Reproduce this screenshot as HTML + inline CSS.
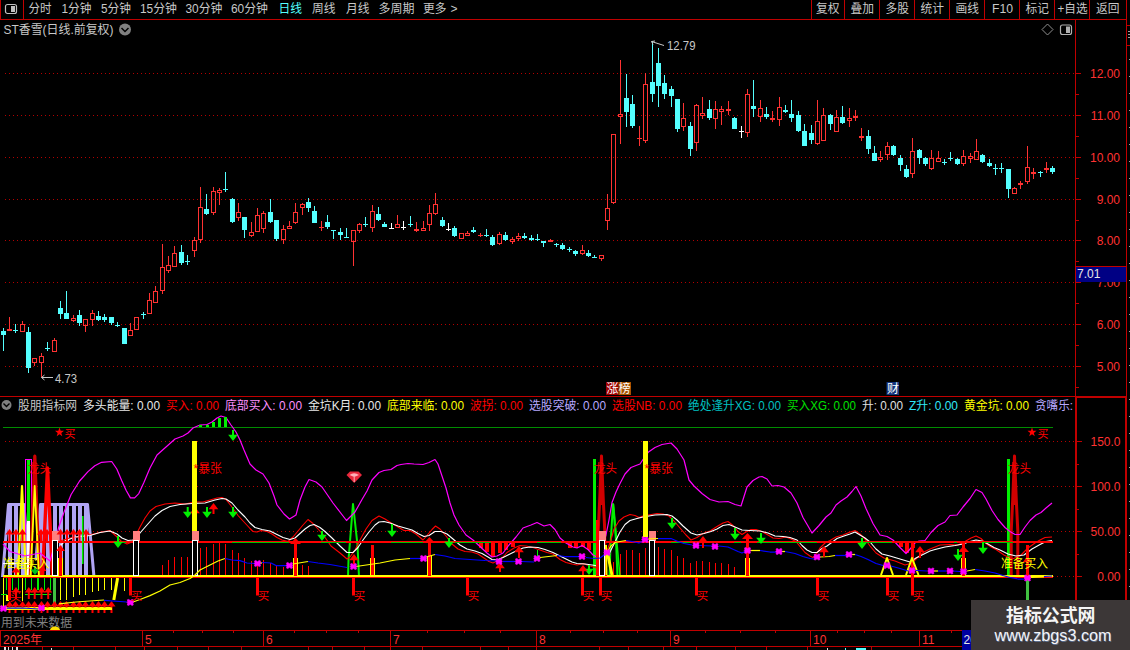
<!DOCTYPE html><html><head><meta charset="utf-8"><title>ST香雪</title><style>html,body{margin:0;padding:0;background:#000}body{width:1130px;height:650px;overflow:hidden}svg{display:block}text{font-family:"Liberation Sans","Noto Sans CJK SC",sans-serif}</style></head><body>
<svg width="1130" height="650" viewBox="0 0 1130 650">
<rect width="1130" height="650" fill="#000"/>
<g shape-rendering="crispEdges">
<line x1="5" y1="73.5" x2="1075" y2="73.5" stroke="#b40000" stroke-width="1" stroke-dasharray="1 3"/>
<line x1="5" y1="115.5" x2="1075" y2="115.5" stroke="#b40000" stroke-width="1" stroke-dasharray="1 3"/>
<line x1="5" y1="157.5" x2="1075" y2="157.5" stroke="#b40000" stroke-width="1" stroke-dasharray="1 3"/>
<line x1="5" y1="199.5" x2="1075" y2="199.5" stroke="#b40000" stroke-width="1" stroke-dasharray="1 3"/>
<line x1="5" y1="240.5" x2="1075" y2="240.5" stroke="#b40000" stroke-width="1" stroke-dasharray="1 3"/>
<line x1="5" y1="282.5" x2="1075" y2="282.5" stroke="#b40000" stroke-width="1" stroke-dasharray="1 3"/>
<line x1="5" y1="324.5" x2="1075" y2="324.5" stroke="#b40000" stroke-width="1" stroke-dasharray="1 3"/>
<line x1="5" y1="366.5" x2="1075" y2="366.5" stroke="#b40000" stroke-width="1" stroke-dasharray="1 3"/>
<rect x="0" y="0" width="1" height="20" fill="#c00000"/>
<rect x="0" y="19" width="1127" height="1" fill="#c00000"/>
<rect x="23" y="0" width="1" height="19" fill="#c00000"/>
<rect x="811" y="0" width="1" height="19" fill="#c00000"/>
<rect x="844" y="0" width="1" height="19" fill="#c00000"/>
<rect x="879" y="0" width="1" height="19" fill="#c00000"/>
<rect x="914" y="0" width="1" height="19" fill="#c00000"/>
<rect x="949" y="0" width="1" height="19" fill="#c00000"/>
<rect x="984" y="0" width="1" height="19" fill="#c00000"/>
<rect x="1019" y="0" width="1" height="19" fill="#c00000"/>
<rect x="1054" y="0" width="1" height="19" fill="#c00000"/>
<rect x="1089" y="0" width="1" height="19" fill="#c00000"/>
<rect x="1126" y="0" width="1" height="397" fill="#c00000"/>
<rect x="1125" y="397" width="2" height="253" fill="#c00000"/>
<rect x="1075" y="20" width="1" height="377" fill="#c00000"/>
<rect x="1075" y="396" width="2" height="204" fill="#c00000"/>
<rect x="0" y="396" width="1076" height="1" fill="#c00000"/>
<rect x="1075" y="396" width="52" height="2" fill="#c00000"/>
<rect x="1076" y="73" width="5" height="1" fill="#c00000"/>
<rect x="1076" y="94" width="3" height="1" fill="#c00000"/>
<rect x="1076" y="115" width="5" height="1" fill="#c00000"/>
<rect x="1076" y="136" width="3" height="1" fill="#c00000"/>
<rect x="1076" y="157" width="5" height="1" fill="#c00000"/>
<rect x="1076" y="178" width="3" height="1" fill="#c00000"/>
<rect x="1076" y="199" width="5" height="1" fill="#c00000"/>
<rect x="1076" y="220" width="3" height="1" fill="#c00000"/>
<rect x="1076" y="240" width="5" height="1" fill="#c00000"/>
<rect x="1076" y="261" width="3" height="1" fill="#c00000"/>
<rect x="1076" y="282" width="5" height="1" fill="#c00000"/>
<rect x="1076" y="303" width="3" height="1" fill="#c00000"/>
<rect x="1076" y="324" width="5" height="1" fill="#c00000"/>
<rect x="1076" y="345" width="3" height="1" fill="#c00000"/>
<rect x="1076" y="366" width="5" height="1" fill="#c00000"/>
<rect x="1076" y="387" width="3" height="1" fill="#c00000"/>
<rect x="1129" y="59" width="1" height="1" fill="#a0a0a0"/>
<rect x="1129" y="76" width="1" height="1" fill="#a0a0a0"/>
<rect x="1129" y="93" width="1" height="1" fill="#a0a0a0"/>
<rect x="1129" y="110" width="1" height="1" fill="#a0a0a0"/>
<rect x="1129" y="127" width="1" height="1" fill="#a0a0a0"/>
<rect x="1129" y="144" width="1" height="1" fill="#a0a0a0"/>
<rect x="1129" y="161" width="1" height="1" fill="#a0a0a0"/>
<rect x="1129" y="178" width="1" height="1" fill="#a0a0a0"/>
<rect x="1129" y="195" width="1" height="1" fill="#a0a0a0"/>
<rect x="1129" y="212" width="1" height="1" fill="#a0a0a0"/>
<rect x="1129" y="229" width="1" height="1" fill="#a0a0a0"/>
<rect x="1129" y="246" width="1" height="1" fill="#a0a0a0"/>
<rect x="1129" y="263" width="1" height="1" fill="#a0a0a0"/>
<rect x="1129" y="280" width="1" height="1" fill="#a0a0a0"/>
<rect x="1129" y="297" width="1" height="1" fill="#a0a0a0"/>
<rect x="1129" y="314" width="1" height="1" fill="#a0a0a0"/>
<rect x="1129" y="331" width="1" height="1" fill="#a0a0a0"/>
<rect x="1129" y="348" width="1" height="1" fill="#a0a0a0"/>
<rect x="1129" y="365" width="1" height="1" fill="#a0a0a0"/>
<rect x="1129" y="382" width="1" height="1" fill="#a0a0a0"/>
<rect x="1129" y="399" width="1" height="1" fill="#a0a0a0"/>
<rect x="1129" y="416" width="1" height="1" fill="#a0a0a0"/>
<rect x="1129" y="433" width="1" height="1" fill="#a0a0a0"/>
<rect x="1129" y="450" width="1" height="1" fill="#a0a0a0"/>
<rect x="1129" y="467" width="1" height="1" fill="#a0a0a0"/>
<rect x="1129" y="484" width="1" height="1" fill="#a0a0a0"/>
<rect x="1129" y="501" width="1" height="1" fill="#a0a0a0"/>
<rect x="1129" y="518" width="1" height="1" fill="#a0a0a0"/>
<rect x="1129" y="535" width="1" height="1" fill="#a0a0a0"/>
<rect x="1129" y="552" width="1" height="1" fill="#a0a0a0"/>
<rect x="1129" y="569" width="1" height="1" fill="#a0a0a0"/>
<rect x="1129" y="586" width="1" height="1" fill="#a0a0a0"/>
<rect x="1129" y="603" width="1" height="1" fill="#a0a0a0"/>
<rect x="1129" y="620" width="1" height="1" fill="#a0a0a0"/>
<rect x="1129" y="637" width="1" height="1" fill="#a0a0a0"/>
<rect x="1127" y="25" width="3" height="1" fill="#c00000"/><rect x="1127" y="45" width="3" height="1" fill="#c00000"/>
<rect x="1128" y="31" width="2" height="1" fill="#a0a0a0"/><rect x="1128" y="34" width="2" height="1" fill="#a0a0a0"/><rect x="1128" y="37" width="2" height="1" fill="#a0a0a0"/>
</g>
<text x="1120" y="78.0" fill="#ff3232" font-size="12" text-anchor="end">12.00</text>
<text x="1120" y="120.0" fill="#ff3232" font-size="12" text-anchor="end">11.00</text>
<text x="1120" y="162.0" fill="#ff3232" font-size="12" text-anchor="end">10.00</text>
<text x="1120" y="204.0" fill="#ff3232" font-size="12" text-anchor="end">9.00</text>
<text x="1120" y="245.0" fill="#ff3232" font-size="12" text-anchor="end">8.00</text>
<text x="1120" y="287.0" fill="#ff3232" font-size="12" text-anchor="end">7.00</text>
<text x="1120" y="329.0" fill="#ff3232" font-size="12" text-anchor="end">6.00</text>
<text x="1120" y="371.0" fill="#ff3232" font-size="12" text-anchor="end">5.00</text>
<text x="28.5" y="13" fill="#c8c8c8" font-size="12" textLength="23" lengthAdjust="spacingAndGlyphs">分时</text>
<text x="61.5" y="13" fill="#c8c8c8" font-size="12" textLength="30" lengthAdjust="spacingAndGlyphs">1分钟</text>
<text x="101" y="13" fill="#c8c8c8" font-size="12" textLength="30" lengthAdjust="spacingAndGlyphs">5分钟</text>
<text x="140" y="13" fill="#c8c8c8" font-size="12" textLength="37" lengthAdjust="spacingAndGlyphs">15分钟</text>
<text x="185.5" y="13" fill="#c8c8c8" font-size="12" textLength="37" lengthAdjust="spacingAndGlyphs">30分钟</text>
<text x="231" y="13" fill="#c8c8c8" font-size="12" textLength="37" lengthAdjust="spacingAndGlyphs">60分钟</text>
<text x="312" y="13" fill="#c8c8c8" font-size="12" textLength="23.5" lengthAdjust="spacingAndGlyphs">周线</text>
<text x="346" y="13" fill="#c8c8c8" font-size="12" textLength="23.5" lengthAdjust="spacingAndGlyphs">月线</text>
<text x="378.5" y="13" fill="#c8c8c8" font-size="12" textLength="36" lengthAdjust="spacingAndGlyphs">多周期</text>
<text x="423" y="13" fill="#c8c8c8" font-size="12" textLength="23.5" lengthAdjust="spacingAndGlyphs">更多</text>
<text x="278.5" y="13" fill="#54ffff" font-size="12" textLength="23.5" lengthAdjust="spacingAndGlyphs">日线</text>
<text x="450.5" y="13" fill="#c8c8c8" font-size="12">&gt;</text>
<text x="816" y="13" fill="#c8c8c8" font-size="12" textLength="23.5" lengthAdjust="spacingAndGlyphs">复权</text>
<text x="850.5" y="13" fill="#c8c8c8" font-size="12" textLength="23.5" lengthAdjust="spacingAndGlyphs">叠加</text>
<text x="885.5" y="13" fill="#c8c8c8" font-size="12" textLength="23.5" lengthAdjust="spacingAndGlyphs">多股</text>
<text x="920.5" y="13" fill="#c8c8c8" font-size="12" textLength="23.5" lengthAdjust="spacingAndGlyphs">统计</text>
<text x="955.5" y="13" fill="#c8c8c8" font-size="12" textLength="23.5" lengthAdjust="spacingAndGlyphs">画线</text>
<text x="992" y="13" fill="#c8c8c8" font-size="12" textLength="21" lengthAdjust="spacingAndGlyphs">F10</text>
<text x="1025.5" y="13" fill="#c8c8c8" font-size="12" textLength="23.5" lengthAdjust="spacingAndGlyphs">标记</text>
<text x="1057.5" y="13" fill="#c8c8c8" font-size="12" textLength="30" lengthAdjust="spacingAndGlyphs">+自选</text>
<text x="1096" y="13" fill="#c8c8c8" font-size="12" textLength="23.5" lengthAdjust="spacingAndGlyphs">返回</text>
<rect x="5.5" y="4.5" width="11" height="9" rx="2" fill="none" stroke="#c0c0c0" stroke-width="1.2"/><rect x="11" y="6" width="4" height="6" fill="#c0c0c0"/>
<text x="3.5" y="33.6" fill="#c8c8c8" font-size="12" textLength="110" lengthAdjust="spacingAndGlyphs">ST香雪(日线.前复权)</text>
<circle cx="125" cy="29.5" r="6" fill="#808080"/><path d="M121.5 28 L125 31.5 L128.5 28" fill="none" stroke="#000" stroke-width="1.5"/>
<path d="M1047.5 24 L1053 29.5 L1047.5 35 L1042 29.5 Z" fill="none" stroke="#909090" stroke-width="1"/>
<rect x="1060.5" y="25" width="11" height="9.5" rx="2" fill="none" stroke="#b0b0b0" stroke-width="1.2"/><rect x="1066" y="26.5" width="4" height="6.5" fill="#b0b0b0"/>
<g shape-rendering="crispEdges">
<rect x="3" y="328" width="1" height="23" fill="#54ffff"/>
<rect x="1" y="331" width="5" height="4" fill="#54ffff"/>
<rect x="9" y="317" width="1" height="14" fill="#ff3232"/>
<rect x="7" y="329" width="5" height="2" fill="#ff3232"/>
<rect x="15" y="324" width="1" height="9" fill="#54ffff"/>
<rect x="13" y="330" width="5" height="1" fill="#54ffff"/>
<rect x="22" y="321" width="1" height="3" fill="#ff3232"/>
<rect x="20.5" y="324.5" width="4" height="7" fill="none" stroke="#ff3232" stroke-width="1"/>
<rect x="28" y="327" width="1" height="46" fill="#54ffff"/>
<rect x="26" y="332" width="5" height="36" fill="#54ffff"/>
<rect x="34" y="363" width="1" height="3" fill="#ff3232"/>
<rect x="32.5" y="358.5" width="4" height="4" fill="none" stroke="#ff3232" stroke-width="1"/>
<rect x="41" y="353" width="1" height="3" fill="#ff3232"/>
<rect x="41" y="363" width="1" height="14" fill="#ff3232"/>
<rect x="39.5" y="356.5" width="4" height="6" fill="none" stroke="#ff3232" stroke-width="1"/>
<rect x="47" y="342" width="1" height="9" fill="#54ffff"/>
<rect x="45" y="348" width="5" height="1" fill="#54ffff"/>
<rect x="54" y="338" width="1" height="2" fill="#ff3232"/>
<rect x="52.5" y="340.5" width="4" height="11" fill="none" stroke="#ff3232" stroke-width="1"/>
<rect x="60" y="301" width="1" height="18" fill="#54ffff"/>
<rect x="58" y="308" width="5" height="6" fill="#54ffff"/>
<rect x="66" y="291" width="1" height="28" fill="#54ffff"/>
<rect x="64" y="313" width="5" height="6" fill="#54ffff"/>
<rect x="73" y="315" width="1" height="3" fill="#ff3232"/>
<rect x="73" y="321" width="1" height="1" fill="#ff3232"/>
<rect x="71.5" y="318.5" width="4" height="2" fill="none" stroke="#ff3232" stroke-width="1"/>
<rect x="79" y="310" width="1" height="16" fill="#54ffff"/>
<rect x="77" y="315" width="5" height="8" fill="#54ffff"/>
<rect x="85" y="326" width="1" height="6" fill="#ff3232"/>
<rect x="83.5" y="319.5" width="4" height="6" fill="none" stroke="#ff3232" stroke-width="1"/>
<rect x="92" y="310" width="1" height="3" fill="#ff3232"/>
<rect x="92" y="320" width="1" height="6" fill="#ff3232"/>
<rect x="90.5" y="313.5" width="4" height="6" fill="none" stroke="#ff3232" stroke-width="1"/>
<rect x="98" y="311" width="1" height="10" fill="#54ffff"/>
<rect x="96" y="316" width="5" height="4" fill="#54ffff"/>
<rect x="104" y="314" width="1" height="8" fill="#54ffff"/>
<rect x="102" y="317" width="5" height="3" fill="#54ffff"/>
<rect x="111" y="317" width="1" height="8" fill="#54ffff"/>
<rect x="109" y="317" width="5" height="6" fill="#54ffff"/>
<rect x="117" y="322" width="1" height="5" fill="#54ffff"/>
<rect x="115" y="325" width="5" height="1" fill="#54ffff"/>
<rect x="124" y="328" width="1" height="16" fill="#54ffff"/>
<rect x="122" y="328" width="5" height="16" fill="#54ffff"/>
<rect x="130" y="323" width="1" height="7" fill="#ff3232"/>
<rect x="128.5" y="330.5" width="4" height="5" fill="none" stroke="#ff3232" stroke-width="1"/>
<rect x="134.5" y="317.5" width="4" height="12" fill="none" stroke="#ff3232" stroke-width="1"/>
<rect x="143" y="312" width="1" height="7" fill="#54ffff"/>
<rect x="141" y="314" width="5" height="1" fill="#54ffff"/>
<rect x="149" y="293" width="1" height="7" fill="#ff3232"/>
<rect x="147.5" y="300.5" width="4" height="13" fill="none" stroke="#ff3232" stroke-width="1"/>
<rect x="155" y="286" width="1" height="5" fill="#ff3232"/>
<rect x="153.5" y="291.5" width="4" height="11" fill="none" stroke="#ff3232" stroke-width="1"/>
<rect x="162" y="244" width="1" height="23" fill="#ff3232"/>
<rect x="162" y="291" width="1" height="3" fill="#ff3232"/>
<rect x="160.5" y="267.5" width="4" height="23" fill="none" stroke="#ff3232" stroke-width="1"/>
<rect x="168" y="256" width="1" height="9" fill="#ff3232"/>
<rect x="168" y="271" width="1" height="2" fill="#ff3232"/>
<rect x="166.5" y="265.5" width="4" height="5" fill="none" stroke="#ff3232" stroke-width="1"/>
<rect x="174" y="246" width="1" height="7" fill="#ff3232"/>
<rect x="172.5" y="253.5" width="4" height="13" fill="none" stroke="#ff3232" stroke-width="1"/>
<rect x="181" y="245" width="1" height="20" fill="#54ffff"/>
<rect x="179" y="252" width="5" height="11" fill="#54ffff"/>
<rect x="187" y="255" width="1" height="10" fill="#54ffff"/>
<rect x="185" y="261" width="5" height="1" fill="#54ffff"/>
<rect x="194" y="237" width="1" height="3" fill="#ff3232"/>
<rect x="194" y="251" width="1" height="6" fill="#ff3232"/>
<rect x="192.5" y="240.5" width="4" height="10" fill="none" stroke="#ff3232" stroke-width="1"/>
<rect x="200" y="187" width="1" height="20" fill="#ff3232"/>
<rect x="200" y="240" width="1" height="3" fill="#ff3232"/>
<rect x="198.5" y="207.5" width="4" height="32" fill="none" stroke="#ff3232" stroke-width="1"/>
<rect x="206" y="194" width="1" height="21" fill="#54ffff"/>
<rect x="204" y="209" width="5" height="5" fill="#54ffff"/>
<rect x="213" y="187" width="1" height="4" fill="#ff3232"/>
<rect x="213" y="213" width="1" height="2" fill="#ff3232"/>
<rect x="211.5" y="191.5" width="4" height="21" fill="none" stroke="#ff3232" stroke-width="1"/>
<rect x="219" y="188" width="1" height="2" fill="#ff3232"/>
<rect x="219" y="193" width="1" height="12" fill="#ff3232"/>
<rect x="217.5" y="190.5" width="4" height="2" fill="none" stroke="#ff3232" stroke-width="1"/>
<rect x="225" y="172" width="1" height="20" fill="#54ffff"/>
<rect x="223" y="189" width="5" height="1" fill="#54ffff"/>
<rect x="232" y="198" width="1" height="25" fill="#54ffff"/>
<rect x="230" y="199" width="5" height="23" fill="#54ffff"/>
<rect x="238" y="203" width="1" height="9" fill="#ff3232"/>
<rect x="238" y="218" width="1" height="3" fill="#ff3232"/>
<rect x="236.5" y="212.5" width="4" height="5" fill="none" stroke="#ff3232" stroke-width="1"/>
<rect x="244" y="217" width="1" height="21" fill="#54ffff"/>
<rect x="242" y="217" width="5" height="13" fill="#54ffff"/>
<rect x="251" y="222" width="1" height="10" fill="#ff3232"/>
<rect x="251" y="236" width="1" height="1" fill="#ff3232"/>
<rect x="249.5" y="232.5" width="4" height="3" fill="none" stroke="#ff3232" stroke-width="1"/>
<rect x="257" y="208" width="1" height="7" fill="#ff3232"/>
<rect x="255.5" y="215.5" width="4" height="16" fill="none" stroke="#ff3232" stroke-width="1"/>
<rect x="263" y="211" width="1" height="2" fill="#ff3232"/>
<rect x="263" y="229" width="1" height="4" fill="#ff3232"/>
<rect x="261.5" y="213.5" width="4" height="15" fill="none" stroke="#ff3232" stroke-width="1"/>
<rect x="270" y="199" width="1" height="24" fill="#54ffff"/>
<rect x="268" y="212" width="5" height="10" fill="#54ffff"/>
<rect x="276" y="220" width="1" height="21" fill="#54ffff"/>
<rect x="274" y="220" width="5" height="19" fill="#54ffff"/>
<rect x="283" y="225" width="1" height="4" fill="#ff3232"/>
<rect x="283" y="240" width="1" height="4" fill="#ff3232"/>
<rect x="281.5" y="229.5" width="4" height="10" fill="none" stroke="#ff3232" stroke-width="1"/>
<rect x="289" y="221" width="1" height="5" fill="#ff3232"/>
<rect x="287.5" y="226.5" width="4" height="2" fill="none" stroke="#ff3232" stroke-width="1"/>
<rect x="295" y="203" width="1" height="9" fill="#ff3232"/>
<rect x="295" y="223" width="1" height="1" fill="#ff3232"/>
<rect x="293.5" y="212.5" width="4" height="10" fill="none" stroke="#ff3232" stroke-width="1"/>
<rect x="302" y="203" width="1" height="1" fill="#ff3232"/>
<rect x="302" y="208" width="1" height="7" fill="#ff3232"/>
<rect x="300.5" y="204.5" width="4" height="3" fill="none" stroke="#ff3232" stroke-width="1"/>
<rect x="308" y="198" width="1" height="14" fill="#54ffff"/>
<rect x="306" y="202" width="5" height="6" fill="#54ffff"/>
<rect x="314" y="206" width="1" height="17" fill="#54ffff"/>
<rect x="312" y="211" width="5" height="12" fill="#54ffff"/>
<rect x="321" y="221" width="1" height="10" fill="#ff3232"/>
<rect x="319" y="227" width="5" height="1" fill="#ff3232"/>
<rect x="327" y="215" width="1" height="14" fill="#54ffff"/>
<rect x="325" y="222" width="5" height="5" fill="#54ffff"/>
<rect x="333" y="230" width="1" height="9" fill="#54ffff"/>
<rect x="331" y="230" width="5" height="1" fill="#54ffff"/>
<rect x="340" y="228" width="1" height="12" fill="#54ffff"/>
<rect x="338" y="232" width="5" height="3" fill="#54ffff"/>
<rect x="346" y="228" width="1" height="10" fill="#54ffff"/>
<rect x="344" y="237" width="5" height="1" fill="#54ffff"/>
<rect x="353" y="242" width="1" height="24" fill="#ff3232"/>
<rect x="351.5" y="230.5" width="4" height="11" fill="none" stroke="#ff3232" stroke-width="1"/>
<rect x="359" y="223" width="1" height="1" fill="#ff3232"/>
<rect x="359" y="231" width="1" height="2" fill="#ff3232"/>
<rect x="357.5" y="224.5" width="4" height="6" fill="none" stroke="#ff3232" stroke-width="1"/>
<rect x="365" y="217" width="1" height="10" fill="#54ffff"/>
<rect x="363" y="224" width="5" height="1" fill="#54ffff"/>
<rect x="372" y="205" width="1" height="6" fill="#ff3232"/>
<rect x="372" y="228" width="1" height="4" fill="#ff3232"/>
<rect x="370.5" y="211.5" width="4" height="16" fill="none" stroke="#ff3232" stroke-width="1"/>
<rect x="378" y="207" width="1" height="14" fill="#54ffff"/>
<rect x="376" y="214" width="5" height="6" fill="#54ffff"/>
<rect x="384" y="222" width="1" height="5" fill="#54ffff"/>
<rect x="382" y="224" width="5" height="3" fill="#54ffff"/>
<rect x="391" y="223" width="1" height="6" fill="#ffffff"/>
<rect x="389" y="228" width="5" height="1" fill="#ffffff"/>
<rect x="397" y="215" width="1" height="9" fill="#ff3232"/>
<rect x="395.5" y="224.5" width="4" height="3" fill="none" stroke="#ff3232" stroke-width="1"/>
<rect x="403" y="221" width="1" height="9" fill="#ffffff"/>
<rect x="401" y="227" width="5" height="1" fill="#ffffff"/>
<rect x="410" y="216" width="1" height="11" fill="#54ffff"/>
<rect x="408" y="224" width="5" height="1" fill="#54ffff"/>
<rect x="416" y="222" width="1" height="10" fill="#ff3232"/>
<rect x="414" y="229" width="5" height="2" fill="#ff3232"/>
<rect x="423" y="221" width="1" height="7" fill="#ff3232"/>
<rect x="421.5" y="228.5" width="4" height="2" fill="none" stroke="#ff3232" stroke-width="1"/>
<rect x="429" y="205" width="1" height="8" fill="#ff3232"/>
<rect x="429" y="225" width="1" height="6" fill="#ff3232"/>
<rect x="427.5" y="213.5" width="4" height="11" fill="none" stroke="#ff3232" stroke-width="1"/>
<rect x="435" y="193" width="1" height="11" fill="#ff3232"/>
<rect x="435" y="214" width="1" height="1" fill="#ff3232"/>
<rect x="433.5" y="204.5" width="4" height="9" fill="none" stroke="#ff3232" stroke-width="1"/>
<rect x="442" y="217" width="1" height="10" fill="#54ffff"/>
<rect x="440" y="220" width="5" height="6" fill="#54ffff"/>
<rect x="448" y="223" width="1" height="8" fill="#ffffff"/>
<rect x="446" y="229" width="5" height="1" fill="#ffffff"/>
<rect x="454" y="226" width="1" height="11" fill="#54ffff"/>
<rect x="452" y="228" width="5" height="8" fill="#54ffff"/>
<rect x="459.5" y="233.5" width="4" height="5" fill="none" stroke="#ff3232" stroke-width="1"/>
<rect x="467" y="231" width="1" height="2" fill="#ff3232"/>
<rect x="465.5" y="233.5" width="4" height="2" fill="none" stroke="#ff3232" stroke-width="1"/>
<rect x="473" y="227" width="1" height="6" fill="#54ffff"/>
<rect x="471" y="230" width="5" height="2" fill="#54ffff"/>
<rect x="480" y="233" width="1" height="4" fill="#ff3232"/>
<rect x="478" y="235" width="5" height="1" fill="#ff3232"/>
<rect x="486" y="229" width="1" height="8" fill="#54ffff"/>
<rect x="484" y="235" width="5" height="1" fill="#54ffff"/>
<rect x="492" y="235" width="1" height="11" fill="#54ffff"/>
<rect x="490" y="237" width="5" height="8" fill="#54ffff"/>
<rect x="499" y="232" width="1" height="2" fill="#ff3232"/>
<rect x="499" y="244" width="1" height="1" fill="#ff3232"/>
<rect x="497.5" y="234.5" width="4" height="9" fill="none" stroke="#ff3232" stroke-width="1"/>
<rect x="505" y="232" width="1" height="9" fill="#54ffff"/>
<rect x="503" y="235" width="5" height="5" fill="#54ffff"/>
<rect x="512" y="237" width="1" height="2" fill="#ff3232"/>
<rect x="512" y="242" width="1" height="2" fill="#ff3232"/>
<rect x="510.5" y="239.5" width="4" height="2" fill="none" stroke="#ff3232" stroke-width="1"/>
<rect x="518" y="233" width="1" height="3" fill="#ff3232"/>
<rect x="518" y="239" width="1" height="2" fill="#ff3232"/>
<rect x="516.5" y="236.5" width="4" height="2" fill="none" stroke="#ff3232" stroke-width="1"/>
<rect x="524" y="233" width="1" height="6" fill="#54ffff"/>
<rect x="522" y="236" width="5" height="2" fill="#54ffff"/>
<rect x="531" y="235" width="1" height="6" fill="#54ffff"/>
<rect x="529" y="238" width="5" height="2" fill="#54ffff"/>
<rect x="537" y="234" width="1" height="7" fill="#54ffff"/>
<rect x="535" y="239" width="5" height="1" fill="#54ffff"/>
<rect x="543" y="241" width="1" height="6" fill="#54ffff"/>
<rect x="541" y="241" width="5" height="2" fill="#54ffff"/>
<rect x="550" y="239" width="1" height="3" fill="#ff3232"/>
<rect x="548" y="240" width="5" height="2" fill="#ff3232"/>
<rect x="556" y="243" width="1" height="4" fill="#54ffff"/>
<rect x="554" y="244" width="5" height="1" fill="#54ffff"/>
<rect x="562" y="243" width="1" height="7" fill="#54ffff"/>
<rect x="560" y="245" width="5" height="4" fill="#54ffff"/>
<rect x="569" y="247" width="1" height="5" fill="#54ffff"/>
<rect x="567" y="249" width="5" height="1" fill="#54ffff"/>
<rect x="575" y="250" width="1" height="6" fill="#54ffff"/>
<rect x="573" y="251" width="5" height="3" fill="#54ffff"/>
<rect x="582" y="245" width="1" height="5" fill="#ff3232"/>
<rect x="582" y="254" width="1" height="1" fill="#ff3232"/>
<rect x="580.5" y="250.5" width="4" height="3" fill="none" stroke="#ff3232" stroke-width="1"/>
<rect x="588" y="250" width="1" height="7" fill="#54ffff"/>
<rect x="586" y="253" width="5" height="3" fill="#54ffff"/>
<rect x="594" y="255" width="1" height="3" fill="#54ffff"/>
<rect x="592" y="257" width="5" height="1" fill="#54ffff"/>
<rect x="601" y="259" width="1" height="2" fill="#ff3232"/>
<rect x="599.5" y="255.5" width="4" height="3" fill="none" stroke="#ff3232" stroke-width="1"/>
<rect x="607" y="194" width="1" height="14" fill="#ff3232"/>
<rect x="607" y="221" width="1" height="9" fill="#ff3232"/>
<rect x="605.5" y="208.5" width="4" height="12" fill="none" stroke="#ff3232" stroke-width="1"/>
<rect x="613" y="203" width="1" height="1" fill="#ff3232"/>
<rect x="611.5" y="134.5" width="4" height="68" fill="none" stroke="#ff3232" stroke-width="1"/>
<rect x="620" y="60" width="1" height="54" fill="#ff3232"/>
<rect x="620" y="117" width="1" height="27" fill="#ff3232"/>
<rect x="618.5" y="114.5" width="4" height="2" fill="none" stroke="#ff3232" stroke-width="1"/>
<rect x="626" y="74" width="1" height="53" fill="#54ffff"/>
<rect x="624" y="98" width="5" height="14" fill="#54ffff"/>
<rect x="632" y="95" width="1" height="33" fill="#54ffff"/>
<rect x="630" y="104" width="5" height="22" fill="#54ffff"/>
<rect x="639" y="126" width="1" height="20" fill="#ff3232"/>
<rect x="637" y="138" width="5" height="1" fill="#ff3232"/>
<rect x="645" y="73" width="1" height="11" fill="#ff3232"/>
<rect x="645" y="141" width="1" height="2" fill="#ff3232"/>
<rect x="643.5" y="84.5" width="4" height="56" fill="none" stroke="#ff3232" stroke-width="1"/>
<rect x="652" y="41" width="1" height="61" fill="#54ffff"/>
<rect x="650" y="82" width="5" height="12" fill="#54ffff"/>
<rect x="658" y="48" width="1" height="59" fill="#54ffff"/>
<rect x="656" y="63" width="5" height="23" fill="#54ffff"/>
<rect x="664" y="75" width="1" height="24" fill="#54ffff"/>
<rect x="662" y="83" width="5" height="11" fill="#54ffff"/>
<rect x="671" y="86" width="1" height="21" fill="#54ffff"/>
<rect x="669" y="89" width="5" height="7" fill="#54ffff"/>
<rect x="677" y="99" width="1" height="33" fill="#54ffff"/>
<rect x="675" y="99" width="5" height="30" fill="#54ffff"/>
<rect x="683" y="103" width="1" height="15" fill="#ff3232"/>
<rect x="683" y="127" width="1" height="4" fill="#ff3232"/>
<rect x="681.5" y="118.5" width="4" height="8" fill="none" stroke="#ff3232" stroke-width="1"/>
<rect x="690" y="122" width="1" height="34" fill="#54ffff"/>
<rect x="688" y="126" width="5" height="23" fill="#54ffff"/>
<rect x="696" y="104" width="1" height="1" fill="#ff3232"/>
<rect x="696" y="143" width="1" height="8" fill="#ff3232"/>
<rect x="694.5" y="105.5" width="4" height="37" fill="none" stroke="#ff3232" stroke-width="1"/>
<rect x="702" y="97" width="1" height="16" fill="#ff3232"/>
<rect x="702" y="116" width="1" height="3" fill="#ff3232"/>
<rect x="700.5" y="113.5" width="4" height="2" fill="none" stroke="#ff3232" stroke-width="1"/>
<rect x="709" y="100" width="1" height="20" fill="#54ffff"/>
<rect x="707" y="109" width="5" height="9" fill="#54ffff"/>
<rect x="715" y="101" width="1" height="8" fill="#ff3232"/>
<rect x="715" y="119" width="1" height="10" fill="#ff3232"/>
<rect x="713.5" y="109.5" width="4" height="9" fill="none" stroke="#ff3232" stroke-width="1"/>
<rect x="721" y="106" width="1" height="3" fill="#ff3232"/>
<rect x="721" y="112" width="1" height="13" fill="#ff3232"/>
<rect x="719.5" y="109.5" width="4" height="2" fill="none" stroke="#ff3232" stroke-width="1"/>
<rect x="728" y="101" width="1" height="14" fill="#ff3232"/>
<rect x="726" y="109" width="5" height="2" fill="#ff3232"/>
<rect x="734" y="117" width="1" height="12" fill="#54ffff"/>
<rect x="732" y="118" width="5" height="11" fill="#54ffff"/>
<rect x="741" y="126" width="1" height="12" fill="#ffffff"/>
<rect x="739" y="131" width="5" height="1" fill="#ffffff"/>
<rect x="747" y="89" width="1" height="5" fill="#ff3232"/>
<rect x="747" y="133" width="1" height="4" fill="#ff3232"/>
<rect x="745.5" y="94.5" width="4" height="38" fill="none" stroke="#ff3232" stroke-width="1"/>
<rect x="753" y="80" width="1" height="37" fill="#54ffff"/>
<rect x="751" y="106" width="5" height="3" fill="#54ffff"/>
<rect x="760" y="100" width="1" height="8" fill="#ff3232"/>
<rect x="760" y="117" width="1" height="5" fill="#ff3232"/>
<rect x="758.5" y="108.5" width="4" height="8" fill="none" stroke="#ff3232" stroke-width="1"/>
<rect x="766" y="107" width="1" height="12" fill="#54ffff"/>
<rect x="764" y="114" width="5" height="3" fill="#54ffff"/>
<rect x="772" y="111" width="1" height="11" fill="#ff3232"/>
<rect x="770" y="118" width="5" height="2" fill="#ff3232"/>
<rect x="779" y="97" width="1" height="10" fill="#ff3232"/>
<rect x="779" y="120" width="1" height="6" fill="#ff3232"/>
<rect x="777.5" y="107.5" width="4" height="12" fill="none" stroke="#ff3232" stroke-width="1"/>
<rect x="785" y="105" width="1" height="8" fill="#54ffff"/>
<rect x="783" y="110" width="5" height="2" fill="#54ffff"/>
<rect x="791" y="100" width="1" height="22" fill="#54ffff"/>
<rect x="789" y="114" width="5" height="4" fill="#54ffff"/>
<rect x="798" y="111" width="1" height="21" fill="#54ffff"/>
<rect x="796" y="115" width="5" height="16" fill="#54ffff"/>
<rect x="804" y="124" width="1" height="22" fill="#54ffff"/>
<rect x="802" y="131" width="5" height="15" fill="#54ffff"/>
<rect x="811" y="125" width="1" height="19" fill="#54ffff"/>
<rect x="809" y="133" width="5" height="7" fill="#54ffff"/>
<rect x="817" y="100" width="1" height="21" fill="#ff3232"/>
<rect x="817" y="144" width="1" height="1" fill="#ff3232"/>
<rect x="815.5" y="121.5" width="4" height="22" fill="none" stroke="#ff3232" stroke-width="1"/>
<rect x="823" y="108" width="1" height="7" fill="#ff3232"/>
<rect x="821.5" y="115.5" width="4" height="25" fill="none" stroke="#ff3232" stroke-width="1"/>
<rect x="830" y="114" width="1" height="16" fill="#54ffff"/>
<rect x="828" y="115" width="5" height="9" fill="#54ffff"/>
<rect x="836" y="110" width="1" height="7" fill="#ff3232"/>
<rect x="834.5" y="117.5" width="4" height="14" fill="none" stroke="#ff3232" stroke-width="1"/>
<rect x="842" y="106" width="1" height="18" fill="#54ffff"/>
<rect x="840" y="117" width="5" height="6" fill="#54ffff"/>
<rect x="849" y="108" width="1" height="10" fill="#ff3232"/>
<rect x="849" y="121" width="1" height="6" fill="#ff3232"/>
<rect x="847.5" y="118.5" width="4" height="2" fill="none" stroke="#ff3232" stroke-width="1"/>
<rect x="855" y="110" width="1" height="11" fill="#ff3232"/>
<rect x="853" y="116" width="5" height="2" fill="#ff3232"/>
<rect x="861" y="128" width="1" height="13" fill="#ff3232"/>
<rect x="859" y="136" width="5" height="2" fill="#ff3232"/>
<rect x="868" y="130" width="1" height="24" fill="#54ffff"/>
<rect x="866" y="136" width="5" height="13" fill="#54ffff"/>
<rect x="874" y="146" width="1" height="15" fill="#54ffff"/>
<rect x="872" y="153" width="5" height="8" fill="#54ffff"/>
<rect x="880" y="151" width="1" height="6" fill="#ff3232"/>
<rect x="880" y="160" width="1" height="2" fill="#ff3232"/>
<rect x="878.5" y="157.5" width="4" height="2" fill="none" stroke="#ff3232" stroke-width="1"/>
<rect x="887" y="142" width="1" height="4" fill="#ff3232"/>
<rect x="887" y="155" width="1" height="5" fill="#ff3232"/>
<rect x="885.5" y="146.5" width="4" height="8" fill="none" stroke="#ff3232" stroke-width="1"/>
<rect x="893" y="145" width="1" height="11" fill="#54ffff"/>
<rect x="891" y="146" width="5" height="9" fill="#54ffff"/>
<rect x="900" y="155" width="1" height="16" fill="#54ffff"/>
<rect x="898" y="158" width="5" height="7" fill="#54ffff"/>
<rect x="906" y="165" width="1" height="13" fill="#54ffff"/>
<rect x="904" y="169" width="5" height="8" fill="#54ffff"/>
<rect x="912" y="138" width="1" height="13" fill="#ff3232"/>
<rect x="912" y="174" width="1" height="4" fill="#ff3232"/>
<rect x="910.5" y="151.5" width="4" height="22" fill="none" stroke="#ff3232" stroke-width="1"/>
<rect x="919" y="149" width="1" height="15" fill="#54ffff"/>
<rect x="917" y="150" width="5" height="8" fill="#54ffff"/>
<rect x="925" y="157" width="1" height="9" fill="#54ffff"/>
<rect x="923" y="158" width="5" height="6" fill="#54ffff"/>
<rect x="931" y="150" width="1" height="8" fill="#ff3232"/>
<rect x="931" y="169" width="1" height="1" fill="#ff3232"/>
<rect x="929.5" y="158.5" width="4" height="10" fill="none" stroke="#ff3232" stroke-width="1"/>
<rect x="938" y="151" width="1" height="7" fill="#ff3232"/>
<rect x="936.5" y="158.5" width="4" height="3" fill="none" stroke="#ff3232" stroke-width="1"/>
<rect x="944" y="159" width="1" height="6" fill="#54ffff"/>
<rect x="942" y="162" width="5" height="1" fill="#54ffff"/>
<rect x="950" y="152" width="1" height="9" fill="#54ffff"/>
<rect x="948" y="158" width="5" height="1" fill="#54ffff"/>
<rect x="957" y="158" width="1" height="7" fill="#54ffff"/>
<rect x="955" y="159" width="5" height="5" fill="#54ffff"/>
<rect x="963" y="150" width="1" height="6" fill="#ff3232"/>
<rect x="963" y="164" width="1" height="2" fill="#ff3232"/>
<rect x="961.5" y="156.5" width="4" height="7" fill="none" stroke="#ff3232" stroke-width="1"/>
<rect x="970" y="153" width="1" height="3" fill="#ff3232"/>
<rect x="970" y="159" width="1" height="4" fill="#ff3232"/>
<rect x="968.5" y="156.5" width="4" height="2" fill="none" stroke="#ff3232" stroke-width="1"/>
<rect x="976" y="139" width="1" height="12" fill="#ff3232"/>
<rect x="974.5" y="151.5" width="4" height="8" fill="none" stroke="#ff3232" stroke-width="1"/>
<rect x="982" y="154" width="1" height="9" fill="#54ffff"/>
<rect x="980" y="155" width="5" height="7" fill="#54ffff"/>
<rect x="989" y="159" width="1" height="8" fill="#54ffff"/>
<rect x="987" y="163" width="5" height="3" fill="#54ffff"/>
<rect x="995" y="164" width="1" height="11" fill="#54ffff"/>
<rect x="993" y="168" width="5" height="1" fill="#54ffff"/>
<rect x="1001" y="163" width="1" height="10" fill="#54ffff"/>
<rect x="999" y="168" width="5" height="1" fill="#54ffff"/>
<rect x="1008" y="169" width="1" height="29" fill="#54ffff"/>
<rect x="1006" y="169" width="5" height="20" fill="#54ffff"/>
<rect x="1014" y="187" width="1" height="1" fill="#ff3232"/>
<rect x="1012.5" y="188.5" width="4" height="5" fill="none" stroke="#ff3232" stroke-width="1"/>
<rect x="1020" y="181" width="1" height="8" fill="#ff3232"/>
<rect x="1018" y="183" width="5" height="2" fill="#ff3232"/>
<rect x="1027" y="146" width="1" height="21" fill="#ff3232"/>
<rect x="1027" y="182" width="1" height="2" fill="#ff3232"/>
<rect x="1025.5" y="167.5" width="4" height="14" fill="none" stroke="#ff3232" stroke-width="1"/>
<rect x="1033" y="168" width="1" height="11" fill="#ff3232"/>
<rect x="1031" y="172" width="5" height="2" fill="#ff3232"/>
<rect x="1040" y="171" width="1" height="6" fill="#54ffff"/>
<rect x="1038" y="172" width="5" height="1" fill="#54ffff"/>
<rect x="1046" y="162" width="1" height="11" fill="#ff3232"/>
<rect x="1044" y="168" width="5" height="2" fill="#ff3232"/>
<rect x="1052" y="166" width="1" height="8" fill="#54ffff"/>
<rect x="1050" y="168" width="5" height="4" fill="#54ffff"/>
</g>
<path d="M41.5 377.5 H53 M41.5 377.5 l3 -2.5 M41.5 377.5 l3 2.5" stroke="#c8c8c8" stroke-width="1" fill="none"/>
<text x="55" y="382.5" fill="#c8c8c8" font-size="12" textLength="22" lengthAdjust="spacingAndGlyphs">4.73</text>
<path d="M651.5 41.5 L664 45.5 M651.5 41.5 l3.5 -0.5 M651.5 41.5 l1.5 3" stroke="#c8c8c8" stroke-width="1" fill="none"/>
<text x="667" y="50" fill="#c8c8c8" font-size="12" textLength="28.5" lengthAdjust="spacingAndGlyphs">12.79</text>
<rect x="1076" y="266" width="50" height="1" fill="#c00000"/><rect x="1076" y="267" width="50" height="15" fill="#000084"/>
<text x="1077" y="278.3" fill="#e8e8e8" font-size="12">7.01</text>
<rect x="606" y="382" width="12.5" height="13" fill="#a00000"/><rect x="618.5" y="382" width="12.5" height="13" fill="#a85000"/>
<text x="606.5" y="393" fill="#ffffff" font-size="12" textLength="24" lengthAdjust="spacingAndGlyphs">涨榜</text>
<rect x="886.5" y="382" width="12.5" height="13" fill="#14347c"/>
<text x="887" y="393" fill="#ffffff" font-size="12">财</text>
<text x="18" y="410" fill="#c8c8c8" font-size="12" textLength="59" lengthAdjust="spacingAndGlyphs">股朋指标网</text>
<text x="83" y="410" fill="#e8e8e8" font-size="12" textLength="77" lengthAdjust="spacingAndGlyphs">多头能量: 0.00</text>
<text x="166" y="410" fill="#ff0000" font-size="12" textLength="53" lengthAdjust="spacingAndGlyphs">买入: 0.00</text>
<text x="225" y="410" fill="#ff90ff" font-size="12" textLength="77" lengthAdjust="spacingAndGlyphs">底部买入: 0.00</text>
<text x="308" y="410" fill="#e8e8e8" font-size="12" textLength="73" lengthAdjust="spacingAndGlyphs">金坑K月: 0.00</text>
<text x="387" y="410" fill="#ffff00" font-size="12" textLength="77" lengthAdjust="spacingAndGlyphs">底部来临: 0.00</text>
<text x="470" y="410" fill="#ff0000" font-size="12" textLength="53" lengthAdjust="spacingAndGlyphs">波拐: 0.00</text>
<text x="529" y="410" fill="#b8a8ff" font-size="12" textLength="77" lengthAdjust="spacingAndGlyphs">选股突破: 0.00</text>
<text x="612" y="410" fill="#ff0000" font-size="12" textLength="70" lengthAdjust="spacingAndGlyphs">选股NB: 0.00</text>
<text x="688" y="410" fill="#00c0c0" font-size="12" textLength="93" lengthAdjust="spacingAndGlyphs">绝处逢升XG: 0.00</text>
<text x="787" y="410" fill="#00e000" font-size="12" textLength="69" lengthAdjust="spacingAndGlyphs">买入XG: 0.00</text>
<text x="862" y="410" fill="#e0e0e0" font-size="12" textLength="41" lengthAdjust="spacingAndGlyphs">升: 0.00</text>
<text x="909" y="410" fill="#30e8f8" font-size="12" textLength="49" lengthAdjust="spacingAndGlyphs">Z升: 0.00</text>
<text x="964" y="410" fill="#ffff00" font-size="12" textLength="65" lengthAdjust="spacingAndGlyphs">黄金坑: 0.00</text>
<text x="1035" y="410" fill="#b8a8ff" font-size="12" textLength="38" lengthAdjust="spacingAndGlyphs">贪嘴乐:</text>
<circle cx="6.5" cy="405" r="5" fill="#808080"/><path d="M3.5 403.5 L6.5 406.5 L9.5 403.5" fill="none" stroke="#000" stroke-width="1.4"/>
<g shape-rendering="crispEdges">
<line x1="5" y1="441.5" x2="1075" y2="441.5" stroke="#b40000" stroke-width="1" stroke-dasharray="1 3"/>
<line x1="5" y1="486.5" x2="1075" y2="486.5" stroke="#b40000" stroke-width="1" stroke-dasharray="1 3"/>
<line x1="5" y1="531.5" x2="1075" y2="531.5" stroke="#b40000" stroke-width="1" stroke-dasharray="1 3"/>
<line x1="5" y1="576.5" x2="1075" y2="576.5" stroke="#b40000" stroke-width="1" stroke-dasharray="1 3"/>
<rect x="1077" y="441" width="5" height="1" fill="#c00000"/>
<rect x="1077" y="486" width="5" height="1" fill="#c00000"/>
<rect x="1077" y="531" width="5" height="1" fill="#c00000"/>
<rect x="1077" y="576" width="5" height="1" fill="#c00000"/>
<rect x="1077" y="464" width="2" height="1" fill="#c00000"/>
<rect x="1077" y="509" width="2" height="1" fill="#c00000"/>
<rect x="1077" y="554" width="2" height="1" fill="#c00000"/>
<rect x="3" y="427" width="1050" height="1" fill="#008c00"/>
</g>
<text x="1120.5" y="446" fill="#ff3232" font-size="12" text-anchor="end">150.0</text>
<text x="1120.5" y="491" fill="#ff3232" font-size="12" text-anchor="end">100.0</text>
<text x="1120.5" y="536" fill="#ff3232" font-size="12" text-anchor="end">50.00</text>
<text x="1120.5" y="581" fill="#ff3232" font-size="12" text-anchor="end">0.00</text>
<g shape-rendering="crispEdges">
<rect x="8" y="505" width="4" height="72" fill="#b0a4f4"/>
<rect x="14" y="505" width="4" height="72" fill="#b0a4f4"/>
<rect x="21" y="505" width="4" height="72" fill="#b0a4f4"/>
<rect x="40" y="505" width="4" height="72" fill="#b0a4f4"/>
<rect x="46" y="505" width="4" height="72" fill="#b0a4f4"/>
<rect x="53" y="505" width="4" height="72" fill="#b0a4f4"/>
<rect x="59" y="505" width="4" height="72" fill="#b0a4f4"/>
<rect x="65" y="505" width="4" height="72" fill="#b0a4f4"/>
<rect x="72" y="505" width="4" height="72" fill="#b0a4f4"/>
<rect x="78" y="505" width="4" height="72" fill="#b0a4f4"/>
<rect x="84" y="505" width="4" height="72" fill="#b0a4f4"/>
</g>
<polyline points="2.5,577.0 8.5,504.5 24.0,504.5 28.0,560.0" fill="none" stroke="#b0a4f4" stroke-width="3" stroke-linejoin="round"/>
<polyline points="36.0,560.0 40.5,504.5 87.5,504.5 94.0,577.0" fill="none" stroke="#b0a4f4" stroke-width="3" stroke-linejoin="round"/>
<g shape-rendering="crispEdges">
<rect x="162" y="565" width="1" height="11" fill="#ff0000"/>
<rect x="168" y="560" width="1" height="16" fill="#ff0000"/>
<rect x="174" y="557" width="1" height="19" fill="#ff0000"/>
<rect x="181" y="557" width="1" height="19" fill="#ff0000"/>
<rect x="187" y="557" width="1" height="19" fill="#ff0000"/>
<rect x="200" y="548" width="1" height="28" fill="#ff0000"/>
<rect x="206" y="547" width="1" height="29" fill="#ff0000"/>
<rect x="213" y="544" width="1" height="32" fill="#ff0000"/>
<rect x="219" y="543" width="1" height="33" fill="#ff0000"/>
<rect x="225" y="544" width="1" height="32" fill="#ff0000"/>
<rect x="232" y="550" width="1" height="26" fill="#ff0000"/>
<rect x="238" y="553" width="1" height="23" fill="#ff0000"/>
<rect x="244" y="558" width="1" height="18" fill="#ff0000"/>
<rect x="251" y="561" width="1" height="15" fill="#ff0000"/>
<rect x="257" y="564" width="1" height="12" fill="#ff0000"/>
<rect x="263" y="560" width="1" height="16" fill="#ff0000"/>
<rect x="270" y="563" width="1" height="13" fill="#ff0000"/>
<rect x="276" y="566" width="1" height="10" fill="#ff0000"/>
<rect x="283" y="567" width="1" height="9" fill="#ff0000"/>
<rect x="302" y="565" width="1" height="11" fill="#ff0000"/>
<rect x="308" y="566" width="1" height="10" fill="#ff0000"/>
<rect x="613" y="561.5" width="1" height="14.5" fill="#ff0000"/>
<rect x="620" y="554" width="1" height="22" fill="#ff0000"/>
<rect x="626" y="550" width="1" height="26" fill="#ff0000"/>
<rect x="632" y="550" width="1" height="26" fill="#ff0000"/>
<rect x="639" y="553" width="1" height="23" fill="#ff0000"/>
<rect x="645" y="548" width="1" height="28" fill="#ff0000"/>
<rect x="658" y="547" width="1" height="29" fill="#ff0000"/>
<rect x="664" y="549" width="1" height="27" fill="#ff0000"/>
<rect x="671" y="550" width="1" height="26" fill="#ff0000"/>
<rect x="677" y="556" width="1" height="20" fill="#ff0000"/>
<rect x="683" y="558" width="1" height="18" fill="#ff0000"/>
<rect x="690" y="563" width="1" height="13" fill="#ff0000"/>
<rect x="696" y="561" width="1" height="15" fill="#ff0000"/>
<rect x="702" y="561" width="1" height="15" fill="#ff0000"/>
<rect x="709" y="562" width="1" height="14" fill="#ff0000"/>
<rect x="715" y="563" width="1" height="13" fill="#ff0000"/>
<rect x="721" y="563" width="1" height="13" fill="#ff0000"/>
<rect x="728" y="564" width="1" height="12" fill="#ff0000"/>
<rect x="734" y="567" width="1" height="9" fill="#ff0000"/>
<rect x="3" y="577" width="1" height="24" fill="#ffff00"/>
<rect x="22" y="577" width="1" height="24" fill="#ffff00"/>
<rect x="60" y="577" width="1" height="22.5" fill="#ffff00"/>
<rect x="66" y="577" width="1" height="22.5" fill="#ffff00"/>
<rect x="73" y="577" width="1" height="20" fill="#ffff00"/>
<rect x="79" y="577" width="1" height="18" fill="#ffff00"/>
<rect x="85" y="577" width="1" height="17.5" fill="#ffff00"/>
<rect x="92" y="577" width="1" height="15" fill="#ffff00"/>
<rect x="98" y="577" width="1" height="14" fill="#ffff00"/>
<rect x="104" y="577" width="1" height="13" fill="#ffff00"/>
<rect x="111" y="577" width="1" height="12.5" fill="#ffff00"/>
<rect x="124" y="577" width="1" height="14" fill="#ffff00"/>
<rect x="6" y="577" width="1" height="13" fill="#00f000"/>
<rect x="12" y="577" width="1" height="13" fill="#00f000"/>
<rect x="18" y="577" width="1" height="13" fill="#00f000"/>
<rect x="25" y="577" width="1" height="13" fill="#00f000"/>
<rect x="31" y="577" width="1" height="13" fill="#00f000"/>
<rect x="44" y="577" width="1" height="13" fill="#00f000"/>
<rect x="50" y="577" width="1" height="13" fill="#00f000"/>
<rect x="37" y="577" width="2" height="13" fill="#00f000"/>
<rect x="1" y="594" width="6" height="1" fill="#00f000"/>
<rect x="25" y="594" width="26" height="1" fill="#00f000"/>
<rect x="3" y="595" width="1" height="12" fill="#ffff00"/>
<rect x="5.5" y="595" width="3" height="6" fill="#ffff00"/>
<rect x="479" y="542" width="3.5" height="6" fill="#ff0000"/>
<rect x="485" y="542" width="3.5" height="10" fill="#ff0000"/>
<rect x="491" y="542" width="3.5" height="14.5" fill="#ff0000"/>
<rect x="498" y="542" width="3.5" height="11" fill="#ff0000"/>
<rect x="504" y="542" width="3.5" height="8" fill="#ff0000"/>
<rect x="511" y="542" width="3.5" height="5" fill="#ff0000"/>
<rect x="568" y="542" width="3.5" height="6" fill="#ff0000"/>
<rect x="574" y="542" width="3.5" height="6" fill="#ff0000"/>
<rect x="581" y="542" width="3.5" height="5" fill="#ff0000"/>
<rect x="587" y="542" width="3.5" height="7.5" fill="#ff0000"/>
<rect x="593" y="542" width="3.5" height="11" fill="#ff0000"/>
<rect x="899" y="542" width="3.5" height="5" fill="#ff0000"/>
<rect x="905" y="542" width="3.5" height="11" fill="#ff0000"/>
<rect x="911" y="542" width="3.5" height="6" fill="#ff0000"/>
</g>
<g shape-rendering="crispEdges">
<rect x="25.5" y="459.5" width="6" height="118" fill="none" stroke="#ff00ff" stroke-width="1"/>
<rect x="27" y="460" width="3" height="117" fill="#00f000"/>
<rect x="27" y="521" width="3" height="56" fill="#ffffff"/>
</g>
<polyline points="30.2,577.0 34.8,456.0 39.4,577.0" fill="none" stroke="#d00000" stroke-width="3.2" stroke-linejoin="round"/>
<path d="M34.8 453 L37 505 L32.6 505 Z" fill="#d00000"/>
<polyline points="18.0,577.0 22.0,486.0 26.0,577.0" fill="none" stroke="#ffff00" stroke-width="2.2" stroke-linejoin="round"/>
<polyline points="30.5,577.0 34.7,486.0 39.0,577.0" fill="none" stroke="#ffff00" stroke-width="1.8" stroke-linejoin="round"/>
<polyline points="42.5,577.0 47.5,468.0 52.5,577.0" fill="none" stroke="#ff0000" stroke-width="3.4" stroke-linejoin="round"/>
<rect x="593" y="459" width="3" height="118" fill="#00f000" shape-rendering="crispEdges"/>
<polyline points="598.2,577.0 598.2,531.0 599.7,500.0 601.5,456.0 603.3,500.0 604.8,531.0 604.8,577.0" fill="none" stroke="#d00000" stroke-width="3" stroke-linejoin="round"/>
<path d="M601.5 455 L604.0 505 L599.0 505 Z" fill="#d00000"/>
<rect x="1007" y="459" width="3" height="118" fill="#00f000" shape-rendering="crispEdges"/>
<polyline points="1011.2,577.0 1011.2,531.0 1012.7,500.0 1014.5,456.0 1016.3,500.0 1017.8,531.0 1017.8,577.0" fill="none" stroke="#d00000" stroke-width="3" stroke-linejoin="round"/>
<path d="M1014.5 455 L1017.0 505 L1012.0 505 Z" fill="#d00000"/>
<polyline points="348.0,577.0 348.5,560.0 353.0,504.0 357.5,545.0 359.0,577.0" fill="none" stroke="#00f000" stroke-width="2" stroke-linejoin="round"/>
<polyline points="609.5,577.0 610.5,545.0 613.0,504.0 616.0,540.0 617.5,577.0" fill="none" stroke="#00f000" stroke-width="2" stroke-linejoin="round"/>
<polyline points="613.5,504.0 620.0,577.0" fill="none" stroke="#00f000" stroke-width="1.5" stroke-linejoin="round"/>
<polyline points="1027.5,545.0 1027.5,577.0" fill="none" stroke="#00f000" stroke-width="1" stroke-linejoin="round"/>
<polyline points="3.0,544.0 10.0,551.5 25.0,556.0 40.0,553.0 50.0,561.0 54.0,547.0 58.4,528.3 64.3,511.4 71.1,494.5 79.6,481.0 88.0,471.6 94.8,465.7 101.6,462.3 111.7,461.5 116.8,469.0 121.9,481.0 126.1,490.3 130.4,497.9 134.6,497.9 138.8,493.6 143.9,482.6 150.0,468.0 157.0,455.0 166.0,447.0 175.0,439.0 183.0,436.0 188.0,433.0 193.0,428.0 200.0,425.0 207.0,424.5 212.0,422.0 217.0,418.0 221.0,416.0 226.0,417.5 231.0,425.0 236.0,432.0 240.0,440.0 244.0,450.0 250.0,464.0 256.0,470.0 263.0,474.0 269.0,483.0 274.0,496.0 277.0,505.0 284.0,514.0 289.5,519.0 296.0,515.0 300.0,500.0 305.0,487.0 309.0,479.5 316.0,482.0 322.0,487.0 333.0,503.0 346.5,520.5 355.0,512.0 362.0,499.5 367.0,491.0 372.0,480.0 379.0,472.5 384.0,470.5 391.0,469.5 397.0,465.5 401.0,464.5 408.0,463.5 414.0,464.0 423.0,464.5 429.0,462.5 435.0,459.5 438.0,464.0 442.0,476.0 446.0,488.0 450.0,503.0 454.0,515.0 459.0,525.0 466.0,535.0 473.0,540.0 480.0,546.5 487.0,553.0 492.0,557.0 497.0,556.0 503.0,553.0 509.0,545.0 516.0,537.0 523.0,528.0 531.0,525.0 537.0,522.5 544.0,526.0 550.0,524.5 555.0,529.5 560.0,538.0 566.0,543.0 573.0,547.0 577.0,548.0 582.0,545.5 588.0,549.5 593.0,555.0 597.0,557.0 603.0,545.0 606.0,535.0 609.0,520.0 612.0,502.5 616.0,492.0 620.0,483.5 625.0,474.0 631.0,467.5 636.0,465.5 640.0,464.0 643.0,459.5 648.5,452.0 655.0,447.5 662.0,444.5 671.0,443.0 677.0,449.0 684.0,460.0 689.0,480.0 694.0,486.0 702.0,493.5 710.0,499.5 719.0,502.0 728.0,501.5 735.0,504.5 741.0,506.0 744.0,496.5 747.0,487.0 753.0,480.5 759.0,477.0 762.0,476.5 767.0,479.0 772.0,486.0 778.0,485.5 784.0,487.0 791.0,493.0 797.0,503.0 803.0,517.5 808.0,526.0 812.0,533.0 819.0,525.5 826.0,517.0 831.0,513.0 836.0,505.0 841.0,501.0 847.0,497.0 852.0,491.5 856.0,486.5 861.0,496.0 866.0,508.5 873.0,523.5 880.0,535.0 887.0,536.5 893.0,540.0 900.0,547.5 906.0,553.5 911.0,548.0 914.0,543.5 919.0,541.0 925.0,540.5 931.0,532.5 938.0,525.5 945.0,522.0 950.0,515.5 957.0,515.0 963.0,507.0 970.0,498.5 976.0,489.5 982.0,492.5 986.0,499.0 992.0,510.5 998.0,519.5 1005.0,527.5 1010.0,531.5 1015.0,534.5 1020.0,534.5 1025.0,527.0 1030.0,520.5 1036.0,515.0 1041.0,512.5 1046.0,508.0 1052.0,503.0" fill="none" stroke="#ff00ff" stroke-width="1.2" stroke-linejoin="round"/>
<polyline points="60.0,541.0 70.0,538.0 85.0,536.0 101.6,532.0 110.0,530.5 116.0,536.0 121.0,541.0 127.0,544.0 132.0,542.0 137.0,533.0 140.0,527.0 145.0,518.0 150.0,511.0 156.0,506.5 165.0,504.0 175.0,503.0 185.0,504.0 195.0,502.0 203.0,502.0 210.0,500.0 217.0,498.0 222.0,497.5 226.0,499.5 232.0,507.0 238.0,515.5 244.0,522.0 250.0,528.5 253.0,531.5 257.0,532.0 261.0,530.5 267.0,531.5 272.0,534.0 277.0,537.5 282.0,540.0 288.0,541.5 293.0,537.0 298.0,531.0 303.0,525.0 308.0,519.5 313.0,523.5 318.0,529.0 323.0,534.5 331.0,546.0 340.0,553.0 347.0,559.0 350.0,557.0 355.0,550.0 360.0,540.0 366.0,529.0 372.0,520.5 379.0,516.0 385.0,519.0 392.0,523.5 398.0,527.0 404.0,530.5 410.0,530.5 416.0,534.0 423.0,540.0 427.0,535.5 432.0,529.5 435.5,526.0 440.0,529.0 446.0,536.0 452.0,544.0 458.0,549.0 465.0,551.5 472.0,552.0 478.0,554.0 484.0,558.0 489.0,561.5 493.0,563.0 497.0,561.0 503.0,557.0 507.0,552.5 514.0,548.0 520.0,545.5 526.0,546.0 533.0,547.5 540.0,550.0 547.0,552.5 553.0,554.0 560.0,559.5 566.0,562.5 572.0,564.0 577.0,565.0 583.0,563.5 590.0,566.0 597.0,568.0 603.0,560.0 608.0,548.0 611.0,540.0 614.0,529.0 619.0,521.0 624.0,517.0 630.0,514.5 635.0,515.5 639.0,517.5 643.0,516.0 657.0,513.5 663.0,514.0 669.0,516.0 674.0,521.0 680.0,528.0 686.0,535.0 691.0,540.0 697.0,537.5 703.0,533.5 710.0,531.0 717.0,526.5 723.0,523.0 728.0,521.5 733.0,525.5 738.0,531.5 742.0,534.5 746.0,532.0 751.0,529.5 756.0,529.5 762.0,531.5 768.0,535.0 773.0,538.0 779.0,538.5 786.0,537.0 791.0,539.0 796.0,541.5 800.0,546.5 805.0,552.5 810.0,556.0 813.0,557.5 817.0,553.0 820.0,548.0 825.0,543.0 830.0,540.5 836.0,537.0 843.0,535.0 849.0,532.5 855.0,530.5 860.0,534.0 865.0,539.0 870.0,546.0 876.0,553.0 884.0,558.0 895.0,561.0 905.0,565.0 912.0,563.0 918.0,557.0 924.0,552.0 930.0,549.0 940.0,545.0 950.0,544.5 958.0,545.0 965.0,541.5 971.0,538.0 976.0,536.0 981.0,538.5 986.0,543.5 991.0,547.0 996.0,549.5 1004.0,555.0 1012.0,559.0 1020.0,556.0 1028.0,548.0 1035.0,543.0 1040.0,540.0 1045.0,537.5 1052.0,537.0" fill="none" stroke="#ff0000" stroke-width="1.1" stroke-linejoin="round"/>
<polyline points="60.0,546.0 65.0,541.0 75.0,537.0 90.0,535.5 100.0,532.5 110.0,531.0 117.0,534.0 122.0,538.0 128.0,540.5 133.0,540.0 140.0,533.0 147.0,525.0 155.0,516.0 162.0,510.5 170.0,506.5 180.0,504.5 192.0,503.5 205.0,503.0 215.0,500.0 222.0,498.5 226.0,499.0 232.0,503.0 238.0,510.0 245.0,517.0 250.0,523.0 255.0,527.5 262.0,529.5 270.0,531.0 276.0,534.0 283.0,537.5 290.0,539.5 295.0,538.0 300.0,533.5 305.0,529.0 310.0,525.5 314.0,524.5 320.0,527.5 325.0,531.5 332.0,538.0 340.0,546.0 347.0,552.5 353.0,552.5 358.0,547.5 363.0,540.0 369.0,532.0 375.0,525.0 379.0,522.0 384.0,521.5 390.0,523.0 398.0,526.0 405.0,528.0 412.0,530.0 418.0,533.5 424.0,536.5 429.0,535.5 435.0,531.5 441.0,531.5 447.0,534.0 453.0,539.0 460.0,545.0 467.0,549.0 475.0,551.0 482.0,553.5 488.0,557.0 492.0,559.5 497.0,560.0 503.0,557.5 509.0,554.5 516.0,551.0 523.0,548.0 530.0,547.0 538.0,547.5 545.0,549.5 553.0,552.5 560.0,556.0 567.0,559.5 572.0,562.0 577.0,563.5 585.0,564.0 592.0,565.0 598.0,566.0 604.0,562.0 610.0,552.0 616.0,540.0 620.0,532.0 625.0,524.5 630.0,520.5 637.0,518.5 643.0,517.0 655.0,515.0 667.0,514.5 672.0,516.0 677.0,520.0 683.0,526.0 691.0,533.0 697.0,535.0 704.0,533.5 711.0,531.5 717.0,529.0 723.0,525.5 729.0,524.5 735.0,527.0 742.0,530.0 750.0,530.5 760.0,531.0 768.0,533.0 775.0,536.0 783.0,536.5 790.0,537.5 797.0,540.0 802.0,545.5 807.0,550.0 812.0,552.5 817.0,552.5 822.0,548.5 827.0,546.0 831.0,543.0 837.0,538.5 844.0,536.0 850.0,534.0 855.0,532.0 860.0,535.0 865.0,538.0 870.0,542.0 876.0,549.0 882.0,554.0 890.0,556.0 900.0,559.0 910.0,562.0 916.0,558.0 922.0,555.0 930.0,551.0 935.0,549.5 945.0,547.0 955.0,545.5 963.0,544.0 970.0,541.5 976.0,540.0 982.0,541.0 988.0,544.0 994.0,547.5 1000.0,550.0 1008.0,554.0 1016.0,556.0 1024.0,555.0 1032.0,549.0 1040.0,544.5 1046.0,541.5 1052.0,540.5" fill="none" stroke="#ffffff" stroke-width="1.1" stroke-linejoin="round"/>
<g shape-rendering="crispEdges">
<rect x="193" y="426.5" width="3" height="0.5" fill="#00f000"/>
<rect x="199" y="425" width="3" height="2" fill="#00f000"/>
<rect x="206" y="424.5" width="3" height="2.5" fill="#00f000"/>
<rect x="212" y="422" width="3" height="5" fill="#00f000"/>
<rect x="218" y="417.5" width="3" height="9.5" fill="#00f000"/>
<rect x="224" y="417" width="3" height="10" fill="#00f000"/>
<rect x="3" y="541" width="1050" height="2" fill="#ff0000"/>
<rect x="118" y="542" width="8" height="1" fill="#00c000"/>
<rect x="232" y="542" width="57" height="1" fill="#00c000"/>
<rect x="321" y="542" width="25" height="1" fill="#00c000"/>
<rect x="391" y="542" width="32" height="1" fill="#00c000"/>
<rect x="455" y="542" width="36" height="1" fill="#00c000"/>
<rect x="537" y="542" width="24" height="1" fill="#00c000"/>
<rect x="671" y="542" width="19" height="1" fill="#00c000"/>
<rect x="734" y="542" width="7" height="1" fill="#00c000"/>
<rect x="757" y="542" width="60" height="1" fill="#00c000"/>
<rect x="860" y="542" width="32" height="1" fill="#00c000"/>
<rect x="954" y="542" width="3" height="1" fill="#00c000"/>
<rect x="982" y="542" width="31" height="1" fill="#00c000"/>
<rect x="3" y="574.5" width="1050" height="3" fill="#ffff00"/>
<rect x="3" y="577" width="1050" height="1" fill="#ff0000"/>
<rect x="5" y="607" width="107" height="3" fill="#ffff00"/>
<rect x="596" y="520" width="2.5" height="56" fill="#ff0000"/>
<rect x="604.5" y="545" width="2.5" height="31" fill="#ff0000"/>
<rect x="51.5" y="531" width="7" height="9.5" fill="#ff8080"/>
<rect x="52.5" y="540.5" width="5" height="35" fill="#000" stroke="#ffffff" stroke-width="1"/>
<rect x="132.5" y="531" width="7" height="9.5" fill="#ff8080"/>
<rect x="133.5" y="540.5" width="5" height="35" fill="#000" stroke="#ffffff" stroke-width="1"/>
<rect x="191.5" y="531" width="7" height="9.5" fill="#ff8080"/>
<rect x="192.5" y="540.5" width="5" height="35" fill="#000" stroke="#ffffff" stroke-width="1"/>
<rect x="598.5" y="531" width="7" height="9.5" fill="#ff8080"/>
<rect x="599.5" y="540.5" width="5" height="35" fill="#000" stroke="#ffffff" stroke-width="1"/>
<rect x="648.5" y="531" width="7" height="9.5" fill="#ff8080"/>
<rect x="649.5" y="540.5" width="5" height="35" fill="#000" stroke="#ffffff" stroke-width="1"/>
<rect x="53" y="578" width="3" height="31" fill="#40c040"/>
<rect x="1026" y="578" width="3" height="31" fill="#40c040"/>
</g>
<rect x="294" y="542" width="3" height="34" fill="#ff0000"/>
<path d="M295.5 538 L301.0 544 L290.0 544 Z" fill="#ff0000"/>
<rect x="293" y="558" width="1" height="17" fill="#ffff00"/><rect x="297" y="558" width="1" height="17" fill="#ffff00"/>
<rect x="428" y="541" width="3" height="35" fill="#ff0000"/>
<path d="M429.5 537 L435.0 543 L424.0 543 Z" fill="#ff0000"/>
<rect x="427" y="556" width="1" height="19" fill="#ffff00"/><rect x="431" y="556" width="1" height="19" fill="#ffff00"/>
<rect x="746" y="537" width="3" height="39" fill="#ff0000"/>
<path d="M747.5 533 L753.0 539 L742.0 539 Z" fill="#ff0000"/>
<rect x="745" y="558" width="1" height="17" fill="#ffff00"/><rect x="749" y="558" width="1" height="17" fill="#ffff00"/>
<rect x="962" y="542" width="3" height="34" fill="#ff0000"/>
<path d="M963.5 546 L969.0 552 L958.0 552 Z" fill="#ff0000"/>
<rect x="961" y="558" width="1" height="17" fill="#ffff00"/><rect x="965" y="558" width="1" height="17" fill="#ffff00"/>
<rect x="371" y="545" width="3" height="30" fill="#ff0000"/>
<rect x="370" y="558" width="1" height="17" fill="#ffff00"/><rect x="374" y="558" width="1" height="17" fill="#ffff00"/>
<rect x="1026" y="545" width="3" height="31" fill="#ff0000"/>
<rect x="911" y="542" width="3" height="53" fill="#ff0000"/>
<path d="M9.5 529 L13.5 534.5 L5.5 534.5 Z" fill="#ff0000"/>
<rect x="8.5" y="534" width="2" height="7" fill="#ff0000"/>
<path d="M16 529 L20 534.5 L12 534.5 Z" fill="#ff0000"/>
<rect x="15" y="534" width="2" height="7" fill="#ff0000"/>
<path d="M22.5 529 L26.5 534.5 L18.5 534.5 Z" fill="#ff0000"/>
<rect x="21.5" y="534" width="2" height="7" fill="#ff0000"/>
<path d="M41 529 L45 534.5 L37 534.5 Z" fill="#ff0000"/>
<rect x="40" y="534" width="2" height="7" fill="#ff0000"/>
<path d="M47 529 L51 534.5 L43 534.5 Z" fill="#ff0000"/>
<rect x="46" y="534" width="2" height="7" fill="#ff0000"/>
<path d="M60.5 529 L64.5 534.5 L56.5 534.5 Z" fill="#ff0000"/>
<rect x="59.5" y="534" width="2" height="7" fill="#ff0000"/>
<path d="M67 529 L71 534.5 L63 534.5 Z" fill="#ff0000"/>
<rect x="66" y="534" width="2" height="7" fill="#ff0000"/>
<path d="M73.5 529 L77.5 534.5 L69.5 534.5 Z" fill="#ff0000"/>
<rect x="72.5" y="534" width="2" height="7" fill="#ff0000"/>
<path d="M79.5 529 L83.5 534.5 L75.5 534.5 Z" fill="#ff0000"/>
<rect x="78.5" y="534" width="2" height="7" fill="#ff0000"/>
<path d="M86 529 L90 534.5 L82 534.5 Z" fill="#ff0000"/>
<rect x="85" y="534" width="2" height="7" fill="#ff0000"/>
<rect x="59" y="549" width="3" height="27" fill="#ff0000"/>
<path d="M60.5 545 L65 551 L56 551 Z" fill="#ff0000"/>
<rect x="58" y="558" width="1" height="17" fill="#ffff00"/><rect x="62" y="558" width="1" height="17" fill="#ffff00"/>
<path d="M16 567 L20.5 572.5 L11.5 572.5 Z" fill="#ff0000"/><rect x="15.0" y="572.0" width="2" height="3.0" fill="#ff0000"/>
<path d="M42 565 L46.5 571 L37.5 571 Z" fill="#ff0000"/><rect x="40.5" y="570.5" width="3" height="4.5" fill="#ff0000"/>
<path d="M35 575 L39.5 569.5 L30.5 569.5 Z" fill="#00c020"/><rect x="34.0" y="566" width="2" height="4.0" fill="#00c020"/>
<rect x="82" y="516" width="1.5" height="48" fill="#00f000"/>
<rect x="8" y="577" width="3" height="23" fill="#ff0000"/>
<path d="M16 587 L20 592.5 L12 592.5 Z" fill="#ff0000"/><rect x="15.0" y="592.0" width="2" height="7.0" fill="#ff0000"/>
<path d="M28.8 587 L32.8 592.5 L24.8 592.5 Z" fill="#ff0000"/><rect x="27.8" y="592.0" width="2" height="7.0" fill="#ff0000"/>
<path d="M34.7 587 L38.7 592.5 L30.700000000000003 592.5 Z" fill="#ff0000"/><rect x="33.7" y="592.0" width="2" height="7.0" fill="#ff0000"/>
<path d="M41.5 587 L45.5 592.5 L37.5 592.5 Z" fill="#ff0000"/><rect x="40.5" y="592.0" width="2" height="7.0" fill="#ff0000"/>
<path d="M48.2 587 L52.2 592.5 L44.2 592.5 Z" fill="#ff0000"/><rect x="47.2" y="592.0" width="2" height="7.0" fill="#ff0000"/>
<path d="M9.5 601 L13.5 606.5 L5.5 606.5 Z" fill="#ff0000"/><rect x="8.5" y="606.0" width="2" height="7.0" fill="#ff0000"/>
<path d="M15.5 601 L19.5 606.5 L11.5 606.5 Z" fill="#ff0000"/><rect x="14.5" y="606.0" width="2" height="7.0" fill="#ff0000"/>
<path d="M22.5 601 L26.5 606.5 L18.5 606.5 Z" fill="#ff0000"/><rect x="21.5" y="606.0" width="2" height="7.0" fill="#ff0000"/>
<path d="M28.5 601 L32.5 606.5 L24.5 606.5 Z" fill="#ff0000"/><rect x="27.5" y="606.0" width="2" height="7.0" fill="#ff0000"/>
<path d="M34.5 601 L38.5 606.5 L30.5 606.5 Z" fill="#ff0000"/><rect x="33.5" y="606.0" width="2" height="7.0" fill="#ff0000"/>
<path d="M41.5 601 L45.5 606.5 L37.5 606.5 Z" fill="#ff0000"/><rect x="40.5" y="606.0" width="2" height="7.0" fill="#ff0000"/>
<path d="M47.5 601 L51.5 606.5 L43.5 606.5 Z" fill="#ff0000"/><rect x="46.5" y="606.0" width="2" height="7.0" fill="#ff0000"/>
<path d="M54.5 601 L58.5 606.5 L50.5 606.5 Z" fill="#ff0000"/><rect x="53.5" y="606.0" width="2" height="7.0" fill="#ff0000"/>
<path d="M60.5 601 L64.5 606.5 L56.5 606.5 Z" fill="#ff0000"/><rect x="59.5" y="606.0" width="2" height="7.0" fill="#ff0000"/>
<path d="M66.5 601 L70.5 606.5 L62.5 606.5 Z" fill="#ff0000"/><rect x="65.5" y="606.0" width="2" height="7.0" fill="#ff0000"/>
<path d="M73.5 601 L77.5 606.5 L69.5 606.5 Z" fill="#ff0000"/><rect x="72.5" y="606.0" width="2" height="7.0" fill="#ff0000"/>
<path d="M79.5 601 L83.5 606.5 L75.5 606.5 Z" fill="#ff0000"/><rect x="78.5" y="606.0" width="2" height="7.0" fill="#ff0000"/>
<path d="M85.5 601 L89.5 606.5 L81.5 606.5 Z" fill="#ff0000"/><rect x="84.5" y="606.0" width="2" height="7.0" fill="#ff0000"/>
<path d="M92.5 601 L96.5 606.5 L88.5 606.5 Z" fill="#ff0000"/><rect x="91.5" y="606.0" width="2" height="7.0" fill="#ff0000"/>
<path d="M98.5 601 L102.5 606.5 L94.5 606.5 Z" fill="#ff0000"/><rect x="97.5" y="606.0" width="2" height="7.0" fill="#ff0000"/>
<path d="M104.5 601 L108.5 606.5 L100.5 606.5 Z" fill="#ff0000"/><rect x="103.5" y="606.0" width="2" height="7.0" fill="#ff0000"/>
<path d="M111.5 601 L115.5 606.5 L107.5 606.5 Z" fill="#ff0000"/><rect x="110.5" y="606.0" width="2" height="7.0" fill="#ff0000"/>
<rect x="5" y="607.5" width="107" height="2.5" fill="#ffff00"/>
<polyline points="117.6,578.0 113.8,600.0" fill="none" stroke="#ffff00" stroke-width="3" stroke-linejoin="round"/>
<polyline points="606.0,545.0 606.5,575.0" fill="none" stroke="#ffff00" stroke-width="2" stroke-linejoin="round"/>
<polyline points="607.5,553.0 612.0,575.0" fill="none" stroke="#ffff00" stroke-width="3" stroke-linejoin="round"/>
<polyline points="881.0,575.0 887.0,558.0 893.0,575.0" fill="none" stroke="#ffff00" stroke-width="2" stroke-linejoin="round"/>
<polyline points="906.0,575.0 912.0,558.0 918.5,575.0" fill="none" stroke="#ffff00" stroke-width="2" stroke-linejoin="round"/>
<polyline points="59.0,603.8 76.0,602.0 89.7,601.0 104.0,600.0" fill="none" stroke="#ffff00" stroke-width="1.25" stroke-linejoin="round"/>
<polyline points="104.0,600.4 127.0,602.0" fill="none" stroke="#0000ff" stroke-width="1.25" stroke-linejoin="round"/>
<polyline points="133.0,602.0 140.0,599.5 150.0,595.6 160.0,591.0 170.0,585.0 180.0,582.5 190.0,578.5 195.0,575.0 200.0,570.0 210.0,565.0 218.0,561.0 225.0,558.5" fill="none" stroke="#ffff00" stroke-width="1.25" stroke-linejoin="round"/>
<polyline points="225.0,558.5 232.0,560.0 240.0,560.7 247.0,563.0 255.0,563.5" fill="none" stroke="#0000ff" stroke-width="1.25" stroke-linejoin="round"/>
<polyline points="259.0,563.0 262.0,563.0" fill="none" stroke="#ffff00" stroke-width="1.25" stroke-linejoin="round"/>
<polyline points="262.0,562.5 271.0,563.0 276.0,565.5 287.0,565.5" fill="none" stroke="#0000ff" stroke-width="1.25" stroke-linejoin="round"/>
<polyline points="293.0,564.0 308.0,561.5" fill="none" stroke="#ffff00" stroke-width="1.25" stroke-linejoin="round"/>
<polyline points="308.0,561.5 318.0,563.0 330.0,564.5 347.0,567.5" fill="none" stroke="#0000ff" stroke-width="1.25" stroke-linejoin="round"/>
<polyline points="356.0,566.5 380.0,563.0 395.0,560.0 410.0,558.5" fill="none" stroke="#ffff00" stroke-width="1.25" stroke-linejoin="round"/>
<polyline points="410.0,558.5 421.0,558.5" fill="none" stroke="#0000ff" stroke-width="1.25" stroke-linejoin="round"/>
<polyline points="426.0,557.0 435.0,554.5" fill="none" stroke="#ffff00" stroke-width="1.25" stroke-linejoin="round"/>
<polyline points="435.0,554.5 445.0,556.0 455.0,558.5 470.0,559.5 485.0,560.5 497.0,561.0" fill="none" stroke="#0000ff" stroke-width="1.25" stroke-linejoin="round"/>
<polyline points="503.0,561.5 515.0,561.5" fill="none" stroke="#0000ff" stroke-width="1.25" stroke-linejoin="round"/>
<polyline points="521.0,561.5 534.0,562.0" fill="none" stroke="#0000ff" stroke-width="1.25" stroke-linejoin="round"/>
<polyline points="540.0,557.5 557.0,555.5" fill="none" stroke="#ffff00" stroke-width="1.25" stroke-linejoin="round"/>
<polyline points="557.0,555.5 565.0,556.5 579.0,556.5" fill="none" stroke="#0000ff" stroke-width="1.25" stroke-linejoin="round"/>
<polyline points="586.0,557.5 594.0,558.5 600.0,558.0 604.0,555.0" fill="none" stroke="#0000ff" stroke-width="1.25" stroke-linejoin="round"/>
<polyline points="607.0,552.0 611.0,546.0 615.0,542.5 620.0,541.5 626.0,540.5" fill="none" stroke="#ffff00" stroke-width="1.25" stroke-linejoin="round"/>
<polyline points="626.0,540.5 632.0,541.5 639.0,543.0 643.0,541.0" fill="none" stroke="#0000ff" stroke-width="1.25" stroke-linejoin="round"/>
<polyline points="648.0,539.0 658.0,538.5" fill="none" stroke="#ffff00" stroke-width="1.25" stroke-linejoin="round"/>
<polyline points="658.0,538.5 671.0,538.5 678.0,541.5 684.0,543.5 692.0,545.0" fill="none" stroke="#0000ff" stroke-width="1.25" stroke-linejoin="round"/>
<polyline points="700.0,545.5 712.0,546.0" fill="none" stroke="#0000ff" stroke-width="1.25" stroke-linejoin="round"/>
<polyline points="719.0,546.0 728.0,547.0 738.0,551.5 742.0,553.0 746.0,551.0" fill="none" stroke="#0000ff" stroke-width="1.25" stroke-linejoin="round"/>
<polyline points="750.0,550.5 760.0,550.5" fill="none" stroke="#ffff00" stroke-width="1.25" stroke-linejoin="round"/>
<polyline points="760.0,550.5 770.0,552.0 776.0,552.0" fill="none" stroke="#0000ff" stroke-width="1.25" stroke-linejoin="round"/>
<polyline points="782.0,551.5 785.0,551.5" fill="none" stroke="#ffff00" stroke-width="1.25" stroke-linejoin="round"/>
<polyline points="785.0,551.5 795.0,553.5 803.0,556.5 810.0,558.5 814.0,559.0" fill="none" stroke="#0000ff" stroke-width="1.25" stroke-linejoin="round"/>
<polyline points="820.0,557.0 829.0,556.5 835.0,555.5" fill="none" stroke="#ffff00" stroke-width="1.25" stroke-linejoin="round"/>
<polyline points="835.0,555.5 846.0,555.5" fill="none" stroke="#0000ff" stroke-width="1.25" stroke-linejoin="round"/>
<polyline points="852.0,554.5 855.0,554.5" fill="none" stroke="#ffff00" stroke-width="1.25" stroke-linejoin="round"/>
<polyline points="855.0,554.5 861.0,556.5 868.0,559.5 876.0,563.5 883.0,565.5" fill="none" stroke="#0000ff" stroke-width="1.25" stroke-linejoin="round"/>
<polyline points="891.0,566.0 900.0,568.5 908.0,571.0" fill="none" stroke="#0000ff" stroke-width="1.25" stroke-linejoin="round"/>
<polyline points="916.0,570.5 927.0,571.0" fill="none" stroke="#0000ff" stroke-width="1.25" stroke-linejoin="round"/>
<polyline points="934.0,571.0 938.0,571.0" fill="none" stroke="#ffff00" stroke-width="1.25" stroke-linejoin="round"/>
<polyline points="938.0,571.0 946.0,571.0" fill="none" stroke="#0000ff" stroke-width="1.25" stroke-linejoin="round"/>
<polyline points="953.0,571.0 960.0,571.5" fill="none" stroke="#0000ff" stroke-width="1.25" stroke-linejoin="round"/>
<polyline points="967.0,571.0 975.0,569.5" fill="none" stroke="#ffff00" stroke-width="1.25" stroke-linejoin="round"/>
<polyline points="975.0,569.5 985.0,571.0 995.0,573.0 1003.0,575.5 1010.0,577.5 1018.0,579.0 1024.0,579.0" fill="none" stroke="#0000ff" stroke-width="1.25" stroke-linejoin="round"/>
<polyline points="1031.0,577.5 1044.0,577.0" fill="none" stroke="#ffff00" stroke-width="1.25" stroke-linejoin="round"/>
<polyline points="1044.0,576.5 1052.0,576.0" fill="none" stroke="#0000ff" stroke-width="1.25" stroke-linejoin="round"/>
<polyline points="7.0,608.0 23.0,608.0 38.0,609.0" fill="none" stroke="#0000ff" stroke-width="1.25" stroke-linejoin="round"/>
<rect x="537" y="550" width="1" height="6" fill="#00f000"/>
<path d="M187.7 518 L192.5 511.7 L182.89999999999998 511.7 Z" fill="#00f000"/><rect x="186.7" y="507" width="2" height="5.199999999999989" fill="#00f000"/>
<path d="M207 518 L211.8 511.7 L202.2 511.7 Z" fill="#00f000"/><rect x="206.0" y="507" width="2" height="5.199999999999989" fill="#00f000"/>
<path d="M233 518 L237.8 511.7 L228.2 511.7 Z" fill="#00f000"/><rect x="232.0" y="507" width="2" height="5.199999999999989" fill="#00f000"/>
<path d="M233 441 L237.8 434.7 L228.2 434.7 Z" fill="#00f000"/><rect x="232.0" y="430" width="2" height="5.199999999999989" fill="#00f000"/>
<path d="M118 548 L122.8 541.7 L113.2 541.7 Z" fill="#00f000"/><rect x="117.0" y="536" width="2" height="6.2000000000000455" fill="#00f000"/>
<path d="M322 541 L326.8 534.7 L317.2 534.7 Z" fill="#00f000"/><rect x="321.0" y="531" width="2" height="4.2000000000000455" fill="#00f000"/>
<path d="M392 537 L396.8 530.7 L387.2 530.7 Z" fill="#00f000"/><rect x="391.0" y="524" width="2" height="7.2000000000000455" fill="#00f000"/>
<path d="M449 548 L453.8 541.7 L444.2 541.7 Z" fill="#00f000"/><rect x="448.0" y="538" width="2" height="4.2000000000000455" fill="#00f000"/>
<path d="M589 575 L593.8 568.7 L584.2 568.7 Z" fill="#00f000"/><rect x="588.0" y="565" width="2" height="4.2000000000000455" fill="#00f000"/>
<path d="M672 529 L676.8 522.7 L667.2 522.7 Z" fill="#00f000"/><rect x="671.0" y="518" width="2" height="5.2000000000000455" fill="#00f000"/>
<path d="M735 540 L739.8 533.7 L730.2 533.7 Z" fill="#00f000"/><rect x="734.0" y="528" width="2" height="6.2000000000000455" fill="#00f000"/>
<path d="M761 544 L765.8 537.7 L756.2 537.7 Z" fill="#00f000"/><rect x="760.0" y="533" width="2" height="5.2000000000000455" fill="#00f000"/>
<path d="M862 549 L866.8 542.7 L857.2 542.7 Z" fill="#00f000"/><rect x="861.0" y="538" width="2" height="5.2000000000000455" fill="#00f000"/>
<path d="M958 561 L962.8 554.7 L953.2 554.7 Z" fill="#00f000"/><rect x="957.0" y="549" width="2" height="6.2000000000000455" fill="#00f000"/>
<path d="M983 554 L987.8 547.7 L978.2 547.7 Z" fill="#00f000"/><rect x="982.0" y="542" width="2" height="6.2000000000000455" fill="#00f000"/>
<path d="M213.5 503 L218.3 509.3 L208.7 509.3 Z" fill="#ff0000"/><rect x="212.5" y="508.8" width="2" height="5.2" fill="#ff0000"/>
<path d="M195 507 L199.8 513.3 L190.2 513.3 Z" fill="#ff0000"/><rect x="194.0" y="512.8" width="2" height="1.2000000000000002" fill="#ff0000"/>
<path d="M354 554 L358.8 560.3 L349.2 560.3 Z" fill="#ff0000"/><rect x="353.0" y="559.8" width="2" height="4.2" fill="#ff0000"/>
<path d="M500 562 L504.8 568.3 L495.2 568.3 Z" fill="#ff0000"/><rect x="499.0" y="567.8" width="2" height="4.2" fill="#ff0000"/>
<path d="M519 546 L523.8 552.3 L514.2 552.3 Z" fill="#ff0000"/><rect x="518.0" y="551.8" width="2" height="6.2" fill="#ff0000"/>
<path d="M583 565 L587.8 571.3 L578.2 571.3 Z" fill="#ff0000"/><rect x="582.0" y="570.8" width="2" height="4.2" fill="#ff0000"/>
<path d="M703 536 L707.8 542.3 L698.2 542.3 Z" fill="#ff0000"/><rect x="702.0" y="541.8" width="2" height="6.2" fill="#ff0000"/>
<path d="M824 546 L828.8 552.3 L819.2 552.3 Z" fill="#ff0000"/><rect x="823.0" y="551.8" width="2" height="5.2" fill="#ff0000"/>
<path d="M920 546 L924.8 552.3 L915.2 552.3 Z" fill="#ff0000"/><rect x="919.0" y="551.8" width="2" height="6.2" fill="#ff0000"/>
<path d="M1027.5 556 L1032.3 562.3 L1022.7 562.3 Z" fill="#ff0000"/><rect x="1026.5" y="561.8" width="2" height="4.2" fill="#ff0000"/>
<g transform="translate(3.4 608.5) scale(0.85)"><path d="M-3.5 -3 L-2 -3.5 L0 -2.2 L2 -3.5 L3.5 -3 L3 -1.5 L3.8 0 L3 1.5 L3.5 3 L2 3.5 L0 2.2 L-2 3.5 L-3.5 3 L-3 1.5 L-3.8 0 L-3 -1.5 Z" fill="#ff00ff" stroke="#ff00ff" stroke-width="0.8" stroke-linejoin="round"/></g>
<g transform="translate(41.5 608) scale(0.85)"><path d="M-3.5 -3 L-2 -3.5 L0 -2.2 L2 -3.5 L3.5 -3 L3 -1.5 L3.8 0 L3 1.5 L3.5 3 L2 3.5 L0 2.2 L-2 3.5 L-3.5 3 L-3 1.5 L-3.8 0 L-3 -1.5 Z" fill="#ff00ff" stroke="#ff00ff" stroke-width="0.8" stroke-linejoin="round"/></g>
<g transform="translate(130.3 602.4) scale(0.85)"><path d="M-3.5 -3 L-2 -3.5 L0 -2.2 L2 -3.5 L3.5 -3 L3 -1.5 L3.8 0 L3 1.5 L3.5 3 L2 3.5 L0 2.2 L-2 3.5 L-3.5 3 L-3 1.5 L-3.8 0 L-3 -1.5 Z" fill="#ff00ff" stroke="#ff00ff" stroke-width="0.8" stroke-linejoin="round"/></g>
<g transform="translate(257.5 563.5) scale(0.85)"><path d="M-3.5 -3 L-2 -3.5 L0 -2.2 L2 -3.5 L3.5 -3 L3 -1.5 L3.8 0 L3 1.5 L3.5 3 L2 3.5 L0 2.2 L-2 3.5 L-3.5 3 L-3 1.5 L-3.8 0 L-3 -1.5 Z" fill="#ff00ff" stroke="#ff00ff" stroke-width="0.8" stroke-linejoin="round"/></g>
<g transform="translate(289.5 565.5) scale(0.85)"><path d="M-3.5 -3 L-2 -3.5 L0 -2.2 L2 -3.5 L3.5 -3 L3 -1.5 L3.8 0 L3 1.5 L3.5 3 L2 3.5 L0 2.2 L-2 3.5 L-3.5 3 L-3 1.5 L-3.8 0 L-3 -1.5 Z" fill="#ff00ff" stroke="#ff00ff" stroke-width="0.8" stroke-linejoin="round"/></g>
<g transform="translate(353.5 566.5) scale(0.85)"><path d="M-3.5 -3 L-2 -3.5 L0 -2.2 L2 -3.5 L3.5 -3 L3 -1.5 L3.8 0 L3 1.5 L3.5 3 L2 3.5 L0 2.2 L-2 3.5 L-3.5 3 L-3 1.5 L-3.8 0 L-3 -1.5 Z" fill="#ff00ff" stroke="#ff00ff" stroke-width="0.8" stroke-linejoin="round"/></g>
<g transform="translate(423.5 558.5) scale(0.85)"><path d="M-3.5 -3 L-2 -3.5 L0 -2.2 L2 -3.5 L3.5 -3 L3 -1.5 L3.8 0 L3 1.5 L3.5 3 L2 3.5 L0 2.2 L-2 3.5 L-3.5 3 L-3 1.5 L-3.8 0 L-3 -1.5 Z" fill="#ff00ff" stroke="#ff00ff" stroke-width="0.8" stroke-linejoin="round"/></g>
<g transform="translate(499 561.5) scale(0.85)"><path d="M-3.5 -3 L-2 -3.5 L0 -2.2 L2 -3.5 L3.5 -3 L3 -1.5 L3.8 0 L3 1.5 L3.5 3 L2 3.5 L0 2.2 L-2 3.5 L-3.5 3 L-3 1.5 L-3.8 0 L-3 -1.5 Z" fill="#ff00ff" stroke="#ff00ff" stroke-width="0.8" stroke-linejoin="round"/></g>
<g transform="translate(518.5 561.5) scale(0.85)"><path d="M-3.5 -3 L-2 -3.5 L0 -2.2 L2 -3.5 L3.5 -3 L3 -1.5 L3.8 0 L3 1.5 L3.5 3 L2 3.5 L0 2.2 L-2 3.5 L-3.5 3 L-3 1.5 L-3.8 0 L-3 -1.5 Z" fill="#ff00ff" stroke="#ff00ff" stroke-width="0.8" stroke-linejoin="round"/></g>
<g transform="translate(537 558.5) scale(0.85)"><path d="M-3.5 -3 L-2 -3.5 L0 -2.2 L2 -3.5 L3.5 -3 L3 -1.5 L3.8 0 L3 1.5 L3.5 3 L2 3.5 L0 2.2 L-2 3.5 L-3.5 3 L-3 1.5 L-3.8 0 L-3 -1.5 Z" fill="#ff00ff" stroke="#ff00ff" stroke-width="0.8" stroke-linejoin="round"/></g>
<g transform="translate(582 556.5) scale(0.85)"><path d="M-3.5 -3 L-2 -3.5 L0 -2.2 L2 -3.5 L3.5 -3 L3 -1.5 L3.8 0 L3 1.5 L3.5 3 L2 3.5 L0 2.2 L-2 3.5 L-3.5 3 L-3 1.5 L-3.8 0 L-3 -1.5 Z" fill="#ff00ff" stroke="#ff00ff" stroke-width="0.8" stroke-linejoin="round"/></g>
<g transform="translate(607 552.5) scale(0.85)"><path d="M-3.5 -3 L-2 -3.5 L0 -2.2 L2 -3.5 L3.5 -3 L3 -1.5 L3.8 0 L3 1.5 L3.5 3 L2 3.5 L0 2.2 L-2 3.5 L-3.5 3 L-3 1.5 L-3.8 0 L-3 -1.5 Z" fill="#ff00ff" stroke="#ff00ff" stroke-width="0.8" stroke-linejoin="round"/></g>
<g transform="translate(645 539.5) scale(0.85)"><path d="M-3.5 -3 L-2 -3.5 L0 -2.2 L2 -3.5 L3.5 -3 L3 -1.5 L3.8 0 L3 1.5 L3.5 3 L2 3.5 L0 2.2 L-2 3.5 L-3.5 3 L-3 1.5 L-3.8 0 L-3 -1.5 Z" fill="#ff00ff" stroke="#ff00ff" stroke-width="0.8" stroke-linejoin="round"/></g>
<g transform="translate(696 545.5) scale(0.85)"><path d="M-3.5 -3 L-2 -3.5 L0 -2.2 L2 -3.5 L3.5 -3 L3 -1.5 L3.8 0 L3 1.5 L3.5 3 L2 3.5 L0 2.2 L-2 3.5 L-3.5 3 L-3 1.5 L-3.8 0 L-3 -1.5 Z" fill="#ff00ff" stroke="#ff00ff" stroke-width="0.8" stroke-linejoin="round"/></g>
<g transform="translate(715 546.5) scale(0.85)"><path d="M-3.5 -3 L-2 -3.5 L0 -2.2 L2 -3.5 L3.5 -3 L3 -1.5 L3.8 0 L3 1.5 L3.5 3 L2 3.5 L0 2.2 L-2 3.5 L-3.5 3 L-3 1.5 L-3.8 0 L-3 -1.5 Z" fill="#ff00ff" stroke="#ff00ff" stroke-width="0.8" stroke-linejoin="round"/></g>
<g transform="translate(747.5 550.5) scale(0.85)"><path d="M-3.5 -3 L-2 -3.5 L0 -2.2 L2 -3.5 L3.5 -3 L3 -1.5 L3.8 0 L3 1.5 L3.5 3 L2 3.5 L0 2.2 L-2 3.5 L-3.5 3 L-3 1.5 L-3.8 0 L-3 -1.5 Z" fill="#ff00ff" stroke="#ff00ff" stroke-width="0.8" stroke-linejoin="round"/></g>
<g transform="translate(779 551.5) scale(0.85)"><path d="M-3.5 -3 L-2 -3.5 L0 -2.2 L2 -3.5 L3.5 -3 L3 -1.5 L3.8 0 L3 1.5 L3.5 3 L2 3.5 L0 2.2 L-2 3.5 L-3.5 3 L-3 1.5 L-3.8 0 L-3 -1.5 Z" fill="#ff00ff" stroke="#ff00ff" stroke-width="0.8" stroke-linejoin="round"/></g>
<g transform="translate(817 557) scale(0.85)"><path d="M-3.5 -3 L-2 -3.5 L0 -2.2 L2 -3.5 L3.5 -3 L3 -1.5 L3.8 0 L3 1.5 L3.5 3 L2 3.5 L0 2.2 L-2 3.5 L-3.5 3 L-3 1.5 L-3.8 0 L-3 -1.5 Z" fill="#ff00ff" stroke="#ff00ff" stroke-width="0.8" stroke-linejoin="round"/></g>
<g transform="translate(849 554.5) scale(0.85)"><path d="M-3.5 -3 L-2 -3.5 L0 -2.2 L2 -3.5 L3.5 -3 L3 -1.5 L3.8 0 L3 1.5 L3.5 3 L2 3.5 L0 2.2 L-2 3.5 L-3.5 3 L-3 1.5 L-3.8 0 L-3 -1.5 Z" fill="#ff00ff" stroke="#ff00ff" stroke-width="0.8" stroke-linejoin="round"/></g>
<g transform="translate(887 565.5) scale(0.85)"><path d="M-3.5 -3 L-2 -3.5 L0 -2.2 L2 -3.5 L3.5 -3 L3 -1.5 L3.8 0 L3 1.5 L3.5 3 L2 3.5 L0 2.2 L-2 3.5 L-3.5 3 L-3 1.5 L-3.8 0 L-3 -1.5 Z" fill="#ff00ff" stroke="#ff00ff" stroke-width="0.8" stroke-linejoin="round"/></g>
<g transform="translate(912 570.5) scale(0.85)"><path d="M-3.5 -3 L-2 -3.5 L0 -2.2 L2 -3.5 L3.5 -3 L3 -1.5 L3.8 0 L3 1.5 L3.5 3 L2 3.5 L0 2.2 L-2 3.5 L-3.5 3 L-3 1.5 L-3.8 0 L-3 -1.5 Z" fill="#ff00ff" stroke="#ff00ff" stroke-width="0.8" stroke-linejoin="round"/></g>
<g transform="translate(931 571) scale(0.85)"><path d="M-3.5 -3 L-2 -3.5 L0 -2.2 L2 -3.5 L3.5 -3 L3 -1.5 L3.8 0 L3 1.5 L3.5 3 L2 3.5 L0 2.2 L-2 3.5 L-3.5 3 L-3 1.5 L-3.8 0 L-3 -1.5 Z" fill="#ff00ff" stroke="#ff00ff" stroke-width="0.8" stroke-linejoin="round"/></g>
<g transform="translate(950 571) scale(0.85)"><path d="M-3.5 -3 L-2 -3.5 L0 -2.2 L2 -3.5 L3.5 -3 L3 -1.5 L3.8 0 L3 1.5 L3.5 3 L2 3.5 L0 2.2 L-2 3.5 L-3.5 3 L-3 1.5 L-3.8 0 L-3 -1.5 Z" fill="#ff00ff" stroke="#ff00ff" stroke-width="0.8" stroke-linejoin="round"/></g>
<g transform="translate(963.5 571.5) scale(0.85)"><path d="M-3.5 -3 L-2 -3.5 L0 -2.2 L2 -3.5 L3.5 -3 L3 -1.5 L3.8 0 L3 1.5 L3.5 3 L2 3.5 L0 2.2 L-2 3.5 L-3.5 3 L-3 1.5 L-3.8 0 L-3 -1.5 Z" fill="#ff00ff" stroke="#ff00ff" stroke-width="0.8" stroke-linejoin="round"/></g>
<g transform="translate(1027.5 578) scale(0.85)"><path d="M-3.5 -3 L-2 -3.5 L0 -2.2 L2 -3.5 L3.5 -3 L3 -1.5 L3.8 0 L3 1.5 L3.5 3 L2 3.5 L0 2.2 L-2 3.5 L-3.5 3 L-3 1.5 L-3.8 0 L-3 -1.5 Z" fill="#ff00ff" stroke="#ff00ff" stroke-width="0.8" stroke-linejoin="round"/></g>
<g shape-rendering="crispEdges">
<rect x="192" y="441" width="5" height="90" fill="#ffff00"/>
<rect x="643" y="441" width="5" height="96" fill="#ffff00"/>
</g>
<rect x="129" y="577" width="3" height="18.5" fill="#ff0000"/><text x="130.8" y="599.5" fill="#ff0000" font-size="11.5">买</text>
<rect x="256" y="577" width="3" height="18.5" fill="#ff0000"/><text x="257.8" y="599.5" fill="#ff0000" font-size="11.5">买</text>
<rect x="352" y="577" width="3" height="18.5" fill="#ff0000"/><text x="353.8" y="599.5" fill="#ff0000" font-size="11.5">买</text>
<rect x="466" y="577" width="3" height="18.5" fill="#ff0000"/><text x="467.8" y="599.5" fill="#ff0000" font-size="11.5">买</text>
<rect x="581" y="577" width="3" height="18.5" fill="#ff0000"/><text x="582.8" y="599.5" fill="#ff0000" font-size="11.5">买</text>
<rect x="599" y="577" width="3" height="18.5" fill="#ff0000"/><text x="600.8" y="599.5" fill="#ff0000" font-size="11.5">买</text>
<rect x="695" y="577" width="3" height="18.5" fill="#ff0000"/><text x="696.8" y="599.5" fill="#ff0000" font-size="11.5">买</text>
<rect x="816" y="577" width="3" height="18.5" fill="#ff0000"/><text x="817.8" y="599.5" fill="#ff0000" font-size="11.5">买</text>
<rect x="886" y="577" width="3" height="18.5" fill="#ff0000"/><text x="887.8" y="599.5" fill="#ff0000" font-size="11.5">买</text>
<rect x="911" y="577" width="3" height="18.5" fill="#ff0000"/><text x="912.8" y="599.5" fill="#ff0000" font-size="11.5">买</text>
<text x="9.5" y="600.5" fill="#ff0000" font-size="12">买</text>
<path d="M59.5 427.5 l1.2 3.3 h3.3 l-2.7 2.1 l1 3.4 l-2.8 -2.1 l-2.8 2.1 l1 -3.4 l-2.7 -2.1 h3.3 Z" fill="#ff0000"/>
<text x="64.5" y="437.5" fill="#ff0000" font-size="11">买</text>
<path d="M1032 427.5 l1.2 3.3 h3.3 l-2.7 2.1 l1 3.4 l-2.8 -2.1 l-2.8 2.1 l1 -3.4 l-2.7 -2.1 h3.3 Z" fill="#ff0000"/>
<text x="1037.5" y="437.5" fill="#ff0000" font-size="11">买</text>
<text x="28" y="473" fill="#ff0000" font-size="12" textLength="23" lengthAdjust="spacingAndGlyphs">龙头</text>
<text x="594" y="473" fill="#ff0000" font-size="12" textLength="23" lengthAdjust="spacingAndGlyphs">龙头</text>
<text x="1008" y="473" fill="#ff0000" font-size="12" textLength="23" lengthAdjust="spacingAndGlyphs">龙头</text>
<text x="193.5" y="473" fill="#ff0000" font-size="12" textLength="28.5" lengthAdjust="spacingAndGlyphs">*暴张</text>
<text x="644.5" y="473" fill="#ff0000" font-size="12" textLength="28.5" lengthAdjust="spacingAndGlyphs">*暴张</text>
<rect x="3" y="563" width="25" height="1" fill="#ffffff"/>
<text x="3.5" y="567.5" fill="#ffff00" font-size="12" textLength="46" lengthAdjust="spacingAndGlyphs">准备买入</text>
<text x="1001" y="568" fill="#ffff00" font-size="12" textLength="47" lengthAdjust="spacingAndGlyphs">准备买入</text>
<path d="M346.5 475 L350 471.5 L358.5 471.5 L362 475 L354.2 483 Z" fill="#e8283c"/><path d="M349.5 475 Q354 471.5 359 475 L354.2 477 Z" fill="#ffb0b8"/><path d="M354.2 477 L354.2 482" stroke="#ffb0b8" stroke-width="1"/>
<g shape-rendering="crispEdges">
<rect x="0" y="630" width="971" height="1" fill="#c00000"/>
<rect x="0" y="646" width="971" height="1" fill="#c00000"/>
<rect x="0" y="630" width="1" height="17" fill="#c00000"/>
<rect x="142" y="630" width="1" height="17" fill="#c00000"/>
<rect x="263" y="630" width="1" height="17" fill="#c00000"/>
<rect x="390" y="630" width="1" height="17" fill="#c00000"/>
<rect x="536" y="630" width="1" height="17" fill="#c00000"/>
<rect x="670" y="630" width="1" height="17" fill="#c00000"/>
<rect x="810" y="630" width="1" height="17" fill="#c00000"/>
<rect x="919" y="630" width="1" height="17" fill="#c00000"/>
<rect x="173" y="630" width="1" height="3" fill="#c00000"/>
<rect x="202" y="630" width="1" height="3" fill="#c00000"/>
<rect x="233" y="630" width="1" height="3" fill="#c00000"/>
<rect x="294" y="630" width="1" height="3" fill="#c00000"/>
<rect x="326" y="630" width="1" height="3" fill="#c00000"/>
<rect x="358" y="630" width="1" height="3" fill="#c00000"/>
<rect x="427" y="630" width="1" height="3" fill="#c00000"/>
<rect x="464" y="630" width="1" height="3" fill="#c00000"/>
<rect x="500" y="630" width="1" height="3" fill="#c00000"/>
<rect x="570" y="630" width="1" height="3" fill="#c00000"/>
<rect x="603" y="630" width="1" height="3" fill="#c00000"/>
<rect x="637" y="630" width="1" height="3" fill="#c00000"/>
<rect x="705" y="630" width="1" height="3" fill="#c00000"/>
<rect x="740" y="630" width="1" height="3" fill="#c00000"/>
<rect x="775" y="630" width="1" height="3" fill="#c00000"/>
<rect x="837" y="630" width="1" height="3" fill="#c00000"/>
<rect x="864" y="630" width="1" height="3" fill="#c00000"/>
<rect x="891" y="630" width="1" height="3" fill="#c00000"/>
<rect x="951" y="630" width="1" height="3" fill="#c00000"/>
<rect x="42" y="646" width="1" height="4" fill="#c00000"/>
<rect x="73" y="646" width="1" height="4" fill="#c00000"/>
<rect x="115" y="646" width="1" height="4" fill="#c00000"/>
<rect x="144" y="646" width="1" height="4" fill="#c00000"/>
<rect x="177" y="646" width="1" height="4" fill="#c00000"/>
<rect x="208" y="646" width="1" height="4" fill="#c00000"/>
<rect x="241" y="646" width="1" height="4" fill="#c00000"/>
<rect x="308" y="646" width="1" height="4" fill="#c00000"/>
<rect x="332" y="646" width="1" height="4" fill="#c00000"/>
<rect x="364" y="646" width="1" height="4" fill="#c00000"/>
<rect x="390" y="646" width="1" height="4" fill="#c00000"/>
<rect x="422" y="646" width="1" height="4" fill="#c00000"/>
<rect x="480" y="646" width="1" height="4" fill="#c00000"/>
<rect x="508" y="646" width="1" height="4" fill="#c00000"/>
<rect x="536" y="646" width="1" height="4" fill="#c00000"/>
<rect x="599" y="646" width="1" height="4" fill="#c00000"/>
<rect x="628" y="646" width="1" height="4" fill="#c00000"/>
<rect x="663" y="646" width="1" height="4" fill="#c00000"/>
<rect x="696" y="646" width="1" height="4" fill="#c00000"/>
<rect x="735" y="646" width="1" height="4" fill="#c00000"/>
<rect x="766" y="646" width="1" height="4" fill="#c00000"/>
<rect x="807" y="646" width="1" height="4" fill="#c00000"/>
<rect x="871" y="646" width="1" height="4" fill="#c00000"/>
<rect x="962" y="630" width="10" height="20" fill="#0000a0"/>
<rect x="4" y="647" width="2" height="3" fill="#e0e0e0"/><rect x="8" y="647" width="1" height="3" fill="#e0e0e0"/><rect x="12" y="647" width="1" height="3" fill="#e0e0e0"/><rect x="16" y="647" width="2" height="3" fill="#e0e0e0"/><rect x="51" y="648" width="1" height="2" fill="#e0e0e0"/>
<rect x="856" y="648" width="10" height="2" fill="#54ffff"/><rect x="827" y="648" width="1" height="2" fill="#e0e0e0"/><rect x="845" y="648" width="1" height="2" fill="#54ffff"/>
</g>
<text x="3" y="643.5" fill="#ff3232" font-size="12" textLength="39" lengthAdjust="spacingAndGlyphs">2025年</text>
<text x="145" y="643.5" fill="#ff3232" font-size="12">5</text>
<text x="266" y="643.5" fill="#ff3232" font-size="12">6</text>
<text x="393" y="643.5" fill="#ff3232" font-size="12">7</text>
<text x="539" y="643.5" fill="#ff3232" font-size="12">8</text>
<text x="673" y="643.5" fill="#ff3232" font-size="12">9</text>
<text x="813" y="643.5" fill="#ff3232" font-size="12">10</text>
<text x="922" y="643.5" fill="#ff3232" font-size="12">11</text>
<text x="963.5" y="643.5" fill="#e8e8e8" font-size="12">20</text>
<text x="1" y="627" fill="#808080" font-size="12" textLength="71" lengthAdjust="spacingAndGlyphs">用到未来数据</text>
<path d="M50 630 A5 3.5 0 0 1 60 630 Z" fill="#ffe000"/>
<rect x="971" y="600" width="159" height="50" fill="#3c3737"/>
<text x="1006" y="621.5" fill="#f4f4f4" font-size="18" textLength="89.5" lengthAdjust="spacingAndGlyphs" font-weight="bold">指标公式网</text>
<text x="995.2" y="641.6" fill="#7090c0" font-size="16" textLength="117" lengthAdjust="spacingAndGlyphs" opacity="0.6">www.zbgs3.com</text>
<text x="994.5" y="641" fill="#f4f4f8" font-size="16" textLength="117" lengthAdjust="spacingAndGlyphs">www.zbgs3.com</text>
</svg></body></html>
